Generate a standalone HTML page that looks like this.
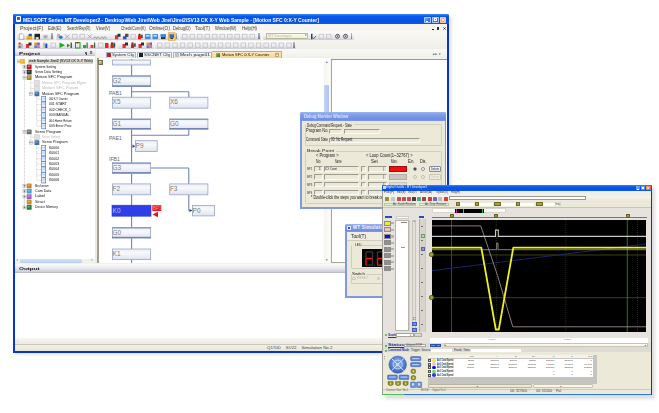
<!DOCTYPE html>
<html><head><meta charset="utf-8">
<style>
*{margin:0;padding:0;box-sizing:border-box}
html,body{width:659px;height:413px;overflow:hidden;background:#fff;font-family:"Liberation Sans",sans-serif}
#root{position:absolute;left:0;top:0;width:659px;height:413px;overflow:hidden;filter:blur(0.3px)}
.a{position:absolute}
.t{position:absolute;white-space:nowrap;line-height:1;font-size:5px;color:#222}
svg text{font-family:"Liberation Sans",sans-serif}
</style></head><body>
<div id="root">
<!-- main -->
<div class="a" style="left:15px;top:17px;width:436.5px;height:338px;background:rgba(0,0,0,0.09);filter:blur(1.2px)"></div>
<div class="a" style="left:13px;top:14px;width:436px;height:338.8px;background:#0a34c8;border-radius:2px 2px 0 0"></div>
<div class="a" style="left:13px;top:14px;width:436px;height:10px;background:linear-gradient(#3d86f8,#0a58ea 25%,#0552e4 70%,#0d58e8);border-radius:2px 2px 0 0"></div>
<div class="a" style="left:15.5px;top:16px;width:5px;height:6px;background:#fff;border-radius:1px"></div>
<div class="a" style="left:16.5px;top:17px;width:3px;height:2.5px;background:#3060e0"></div>
<div class="t" style="left:22.5px;top:19.0px;font-size:4.9px;color:#fff;font-weight:bold;transform-origin:0 0;transform:scaleX(1.022);">MELSOFT Series MT Developer2 - Desktop\Web Jirei\Web Jirei\Jirei2\SV13 CK X-Y Web Sample - [Motion SFC 0:X-Y Counter]</div>
<div class="a" style="left:424px;top:16.6px;width:6.6px;height:6.2px;background:linear-gradient(135deg,#7fb0fa,#3a78ee 60%,#2a64e0);border:0.4px solid #a8c8ff;border-radius:0.8px"></div>
<div class="a" style="left:432px;top:16.6px;width:6.6px;height:6.2px;background:linear-gradient(135deg,#7fb0fa,#3a78ee 60%,#2a64e0);border:0.4px solid #a8c8ff;border-radius:0.8px"></div>
<div class="a" style="left:440px;top:16.6px;width:6.4px;height:6.2px;background:linear-gradient(135deg,#f8a070,#e85a28 60%,#d84818);border:0.4px solid #ffc8a8;border-radius:0.8px"></div>
<div class="a" style="left:425.5px;top:20.6px;width:2.6px;height:0.9px;background:#fff"></div>
<div class="a" style="left:434px;top:18.3px;width:2.6px;height:2.4px;border:0.6px solid #fff;border-top-width:0.9px"></div>
<svg class="a" style="left:440px;top:16.6px" width="6.4" height="6.2" viewBox="0 0 6.4 6.2"><path d="M1.6,1.5 L4.8,4.7 M4.8,1.5 L1.6,4.7" stroke="#fff" stroke-width="1.1"/></svg>
<div class="a" style="left:15px;top:24px;width:432px;height:327px;background:#f3f2ec"></div>
<div class="a" style="left:15px;top:24px;width:432px;height:7px;background:#f6f5f0"></div>
<div class="t" style="left:20px;top:26.8px;font-size:4.5px;color:#3a3a3a;transform-origin:0 0;transform:scaleX(1.180);">Project(F)</div>
<div class="t" style="left:48.3px;top:26.8px;font-size:4.5px;color:#3a3a3a;transform-origin:0 0;transform:scaleX(0.974);">Edit(E)</div>
<div class="t" style="left:66.7px;top:26.8px;font-size:4.5px;color:#3a3a3a;transform-origin:0 0;transform:scaleX(0.776);">Search/Rep(R)</div>
<div class="t" style="left:95.8px;top:26.8px;font-size:4.5px;color:#3a3a3a;transform-origin:0 0;transform:scaleX(0.906);">View(V)</div>
<div class="t" style="left:121px;top:26.8px;font-size:4.5px;color:#3a3a3a;transform-origin:0 0;transform:scaleX(0.806);">Check/Conv(K)</div>
<div class="t" style="left:149px;top:26.8px;font-size:4.5px;color:#3a3a3a;transform-origin:0 0;transform:scaleX(1.077);">Online(O)</div>
<div class="t" style="left:172.5px;top:26.8px;font-size:4.5px;color:#3a3a3a;transform-origin:0 0;transform:scaleX(0.897);">Debug(D)</div>
<div class="t" style="left:195px;top:26.8px;font-size:4.5px;color:#3a3a3a;transform-origin:0 0;transform:scaleX(1.071);">Tool(T)</div>
<div class="t" style="left:215px;top:26.8px;font-size:4.5px;color:#3a3a3a;transform-origin:0 0;transform:scaleX(0.920);">Window(W)</div>
<div class="t" style="left:241.5px;top:26.8px;font-size:4.5px;color:#3a3a3a;transform-origin:0 0;transform:scaleX(0.968);">Help(H)</div>
<div class="a" style="left:431.5px;top:29.4px;width:2.2px;height:0.9px;background:#222"></div>
<div class="a" style="left:436.6px;top:27.3px;width:2.6px;height:2.6px;background:#333"></div>
<svg class="a" style="left:442.5px;top:27px" width="3" height="3" viewBox="0 0 3 3"><path d="M0.4,0.4 L2.6,2.6 M2.6,0.4 L0.4,2.6" stroke="#222" stroke-width="0.8"/></svg>
<div class="a" style="left:15px;top:31px;width:432px;height:18px;background:linear-gradient(#f8f8f5,#efeee8)"></div>
<div class="a" style="left:16.5px;top:31.8px;width:37.5px;height:8.4px;background:linear-gradient(#fefefe,#f0f0f2 45%,#dcdce6 85%,#c8c8d4);border-radius:1.5px"></div>
<div class="a" style="left:51.4px;top:33px;width:1.6px;height:6.2px;background:linear-gradient(#b8b8c4,#7c7c8c)"></div>
<div class="a" style="left:55.5px;top:31.8px;width:123.0px;height:8.4px;background:linear-gradient(#fefefe,#f0f0f2 45%,#dcdce6 85%,#c8c8d4);border-radius:1.5px"></div>
<div class="a" style="left:175.9px;top:33px;width:1.6px;height:6.2px;background:linear-gradient(#b8b8c4,#7c7c8c)"></div>
<div class="a" style="left:180px;top:31.8px;width:81px;height:8.4px;background:linear-gradient(#fefefe,#f0f0f2 45%,#dcdce6 85%,#c8c8d4);border-radius:1.5px"></div>
<div class="a" style="left:258.4px;top:33px;width:1.6px;height:6.2px;background:linear-gradient(#b8b8c4,#7c7c8c)"></div>
<div class="a" style="left:263px;top:31.8px;width:90.5px;height:8.4px;background:linear-gradient(#fefefe,#f0f0f2 45%,#dcdce6 85%,#c8c8d4);border-radius:1.5px"></div>
<div class="a" style="left:350.9px;top:33px;width:1.6px;height:6.2px;background:linear-gradient(#b8b8c4,#7c7c8c)"></div>
<div class="a" style="left:16.5px;top:40.6px;width:99.5px;height:8.4px;background:linear-gradient(#fefefe,#f0f0f2 45%,#dcdce6 85%,#c8c8d4);border-radius:1.5px"></div>
<div class="a" style="left:113.4px;top:41.8px;width:1.6px;height:6.2px;background:linear-gradient(#b8b8c4,#7c7c8c)"></div>
<div class="a" style="left:117.5px;top:40.6px;width:36.0px;height:8.4px;background:linear-gradient(#fefefe,#f0f0f2 45%,#dcdce6 85%,#c8c8d4);border-radius:1.5px"></div>
<div class="a" style="left:150.9px;top:41.8px;width:1.6px;height:6.2px;background:linear-gradient(#b8b8c4,#7c7c8c)"></div>
<div class="a" style="left:155px;top:40.6px;width:141px;height:8.4px;background:linear-gradient(#fefefe,#f0f0f2 45%,#dcdce6 85%,#c8c8d4);border-radius:1.5px"></div>
<div class="a" style="left:293.4px;top:41.8px;width:1.6px;height:6.2px;background:linear-gradient(#b8b8c4,#7c7c8c)"></div>
<svg class="a" style="left:0;top:0" width="460" height="50" viewBox="0 0 460 50"><path d="M19.3,33.8 h3 l1.5,1.5 v4 h-4.5 z" fill="#fff" stroke="#8a8a8a" stroke-width="0.6"/><rect x="26.6" y="35.8" width="5.5" height="3.5" fill="#f0b818"/><rect x="28.6" y="33.8" width="3.2" height="2.4" fill="#2448c8"/><rect x="26.6" y="37.8" width="5.5" height="1.5" fill="#e8a010"/><rect x="34.5" y="33.8" width="5.5" height="5.5" fill="#222"/><rect x="35.7" y="37.099999999999994" width="3" height="2.2" fill="#e8e8d0"/><rect x="43.3" y="34.8" width="4.5" height="4" fill="#c8c8b8"/><rect x="44.3" y="35.8" width="2" height="2" fill="#a0a080"/><rect x="57" y="33.8" width="3" height="4" fill="#b8b8c0"/><circle cx="60.8" cy="37.3" r="1.8" fill="#2878d8"/><path d="M65.0,34.3 L69.5,38.8 M69.5,34.3 L65.0,38.8" stroke="#a0a0a0" stroke-width="0.8"/><rect x="72.5" y="34.3" width="4.5" height="4.5" fill="none" stroke="#c4c4c4" stroke-width="0.8"/><rect x="80.0" y="34.3" width="4.5" height="4.5" fill="none" stroke="#c4c4c4" stroke-width="0.8"/><path d="M87.5,34.3 L92,38.8 M92,34.3 L87.5,38.8" stroke="#a0a0a0" stroke-width="0.8"/><path d="M93.5,38.8 q1.5,-4 3,0 M96.5,38.8 q1.5,-4 3,0" stroke="#909090" stroke-width="0.9" fill="none"/><path d="M100.5,38.8 q1.5,-4 3,0 M103.5,38.8 q1.5,-4 3,0" stroke="#909090" stroke-width="0.9" fill="none"/><rect x="115" y="35.3" width="3.2" height="4" fill="#e03030"/><rect x="117.5" y="33.8" width="3" height="3" fill="#203828"/><rect x="123" y="36.3" width="3.5" height="3" fill="#2850e0"/><rect x="125.2" y="33.8" width="3.2" height="3" fill="#303018"/><rect x="126.4" y="34.4" width="1.6" height="1.6" fill="#e04020"/><rect x="131.0" y="34.3" width="4.5" height="4.5" fill="none" stroke="#c4c4c4" stroke-width="0.8"/><rect x="138.0" y="35.599999999999994" width="3" height="3.7" fill="#e81818"/><rect x="138.5" y="33.8" width="2" height="2" fill="#602020"/><rect x="141.1" y="34.599999999999994" width="1.6" height="3.5" fill="#305040"/><rect x="145" y="34.099999999999994" width="5.5" height="5" fill="#4088e0"/><rect x="146" y="35.0" width="3.5" height="1.6" fill="#c8e0ff"/><rect x="152.5" y="34.099999999999994" width="5.5" height="5" fill="#4088e0"/><rect x="153.5" y="35.0" width="3.5" height="1.6" fill="#c8e0ff"/><rect x="160.5" y="34.099999999999994" width="5.5" height="3" fill="#4088e0"/><rect x="161.0" y="37.099999999999994" width="4.5" height="2" fill="#303030"/><rect x="168.2" y="32.8" width="7" height="7.5" fill="#f8c860" stroke="#d09030" stroke-width="0.5"/><rect x="169.5" y="34.3" width="4.5" height="3.5" fill="#3068c8"/><rect x="170.5" y="37.8" width="2.5" height="1.2" fill="#303030"/><rect x="182.5" y="34.3" width="4.5" height="4.5" fill="none" stroke="#c4c4c4" stroke-width="0.8"/><rect x="190.0" y="34.3" width="4.5" height="4.5" fill="none" stroke="#c4c4c4" stroke-width="0.8"/><rect x="197.5" y="34.3" width="4.5" height="4.5" fill="none" stroke="#c4c4c4" stroke-width="0.8"/><rect x="205.0" y="34.3" width="4.5" height="4.5" fill="none" stroke="#c4c4c4" stroke-width="0.8"/><rect x="212.5" y="34.3" width="4.5" height="4.5" fill="none" stroke="#c4c4c4" stroke-width="0.8"/><rect x="220.0" y="34.3" width="4.5" height="4.5" fill="none" stroke="#c4c4c4" stroke-width="0.8"/><rect x="227.5" y="34.3" width="4.5" height="4.5" fill="none" stroke="#c4c4c4" stroke-width="0.8"/><rect x="235.0" y="34.3" width="4.5" height="4.5" fill="none" stroke="#c4c4c4" stroke-width="0.8"/><rect x="242.5" y="34.3" width="4.5" height="4.5" fill="none" stroke="#c4c4c4" stroke-width="0.8"/><rect x="250.0" y="34.3" width="4.5" height="4.5" fill="none" stroke="#c4c4c4" stroke-width="0.8"/><rect x="311" y="33.8" width="1.5" height="5.5" fill="#404040"/><path d="M312.5,37.3 L313.8,38.8 L316,35.8" stroke="#20a020" stroke-width="1" fill="none"/><rect x="319.0" y="34.3" width="4.5" height="4.5" fill="none" stroke="#c4c4c4" stroke-width="0.8"/><rect x="326.5" y="34.3" width="4.5" height="4.5" fill="none" stroke="#c4c4c4" stroke-width="0.8"/><circle cx="337.5" cy="36.3" r="2" fill="#d8d8d8" stroke="#505050" stroke-width="0.9"/><line x1="337.5" y1="35.4" x2="337.5" y2="37.199999999999996" stroke="#303030" stroke-width="0.6"/><circle cx="345.5" cy="36.3" r="2" fill="#d8d8d8" stroke="#505050" stroke-width="0.9"/><line x1="345.5" y1="35.4" x2="345.5" y2="37.199999999999996" stroke="#303030" stroke-width="0.6"/><rect x="18.5" y="42.5" width="2.2" height="2.2" fill="#e03838"/><rect x="18.5" y="45.5" width="2.2" height="2.4" fill="#607060"/><rect x="21.2" y="43.5" width="1.6" height="4.4" fill="#b0b0b8"/><rect x="26" y="44.0" width="3.2" height="4" fill="#e03030"/><rect x="28.5" y="42.5" width="3" height="3" fill="#203828"/><rect x="34.3" y="42.5" width="2.7" height="2.7" fill="#f09030"/><rect x="37.099999999999994" y="42.5" width="2.7" height="2.7" fill="#8060d0"/><rect x="34.3" y="45.3" width="2.7" height="2.7" fill="#5080e0"/><rect x="37.099999999999994" y="45.3" width="2.7" height="2.7" fill="#e07070"/><rect x="43.0" y="42.5" width="2" height="5.5" fill="#b8c0d8"/><rect x="45.3" y="43.5" width="2" height="4.5" fill="#2840b8"/><rect x="51.0" y="43.0" width="4.5" height="4.5" fill="none" stroke="#c4c4c4" stroke-width="0.8"/><path d="M59.5,42.5 L65.0,45.3 L59.5,48.1 z" fill="#18b018"/><path d="M67,43.5 L70,45.5 L67,47.5 z" fill="#18a018"/><rect x="70.5" y="42.5" width="1.5" height="5.5" fill="#506050"/><rect x="75.5" y="42.5" width="4.5" height="5.5" fill="none" stroke="#18a018" stroke-width="1"/><rect x="76.5" y="42.2" width="2" height="1.5" fill="#e03030"/><rect x="83.0" y="45.0" width="3" height="3" fill="#20b020"/><rect x="86.5" y="42.5" width="1.2" height="5.5" fill="#506050"/><rect x="90.5" y="45.0" width="3" height="3" fill="#f04010"/><rect x="94" y="42.5" width="1.2" height="5.5" fill="#506050"/><rect x="98.5" y="43.0" width="4.5" height="4.5" fill="none" stroke="#c4c4c4" stroke-width="0.8"/><rect x="105" y="43.0" width="3.5" height="5" fill="#f02020"/><rect x="110.5" y="44.3" width="3" height="3.7" fill="#e81818"/><rect x="111" y="42.5" width="2" height="2" fill="#602020"/><rect x="113.6" y="43.3" width="1.6" height="3.5" fill="#305040"/><rect x="122.5" y="44.0" width="3.2" height="4" fill="#e03030"/><rect x="125.0" y="42.5" width="3" height="3" fill="#203828"/><rect x="131.0" y="44.3" width="3" height="3.7" fill="#e81818"/><rect x="131.5" y="42.5" width="2" height="2" fill="#602020"/><rect x="134.1" y="43.3" width="1.6" height="3.5" fill="#305040"/><rect x="138.5" y="44.0" width="3.2" height="4" fill="#e03030"/><rect x="141.0" y="42.5" width="3" height="3" fill="#203828"/><rect x="146.5" y="42.5" width="2.7" height="2.7" fill="#f09030"/><rect x="149.3" y="42.5" width="2.7" height="2.7" fill="#8060d0"/><rect x="146.5" y="45.3" width="2.7" height="2.7" fill="#5080e0"/><rect x="149.3" y="45.3" width="2.7" height="2.7" fill="#e07070"/><rect x="157.5" y="43.0" width="4.5" height="4.5" fill="none" stroke="#c4c4c4" stroke-width="0.8"/><rect x="165.1" y="43.0" width="4.5" height="4.5" fill="none" stroke="#c4c4c4" stroke-width="0.8"/><rect x="172.7" y="43.0" width="4.5" height="4.5" fill="none" stroke="#c4c4c4" stroke-width="0.8"/><rect x="180.3" y="43.0" width="4.5" height="4.5" fill="none" stroke="#c4c4c4" stroke-width="0.8"/><rect x="187.9" y="43.0" width="4.5" height="4.5" fill="none" stroke="#c4c4c4" stroke-width="0.8"/><rect x="195.5" y="43.0" width="4.5" height="4.5" fill="none" stroke="#c4c4c4" stroke-width="0.8"/><rect x="203.1" y="43.0" width="4.5" height="4.5" fill="none" stroke="#c4c4c4" stroke-width="0.8"/><rect x="210.7" y="43.0" width="4.5" height="4.5" fill="none" stroke="#c4c4c4" stroke-width="0.8"/><rect x="218.3" y="43.0" width="4.5" height="4.5" fill="none" stroke="#c4c4c4" stroke-width="0.8"/><rect x="225.89999999999998" y="43.0" width="4.5" height="4.5" fill="none" stroke="#c4c4c4" stroke-width="0.8"/><rect x="233.5" y="43.0" width="4.5" height="4.5" fill="none" stroke="#c4c4c4" stroke-width="0.8"/><rect x="241.1" y="43.0" width="4.5" height="4.5" fill="none" stroke="#c4c4c4" stroke-width="0.8"/><rect x="248.7" y="43.0" width="4.5" height="4.5" fill="none" stroke="#c4c4c4" stroke-width="0.8"/><rect x="256.3" y="43.0" width="4.5" height="4.5" fill="none" stroke="#c4c4c4" stroke-width="0.8"/><rect x="263.9" y="43.0" width="4.5" height="4.5" fill="none" stroke="#c4c4c4" stroke-width="0.8"/><rect x="271.5" y="43.0" width="4.5" height="4.5" fill="none" stroke="#c4c4c4" stroke-width="0.8"/><rect x="279.1" y="43.0" width="4.5" height="4.5" fill="none" stroke="#c4c4c4" stroke-width="0.8"/><rect x="286.7" y="43.0" width="4.5" height="4.5" fill="none" stroke="#c4c4c4" stroke-width="0.8"/></svg>
<div class="a" style="left:266.4px;top:33.3px;width:42px;height:6px;background:linear-gradient(#fdfde8,#f2f0d0);border:0.6px solid #b8b8a0"></div>
<div class="t" style="left:268px;top:34.6px;font-size:3.8px;color:#b8b8a0;">MT Developer</div>
<div class="t" style="left:304.6px;top:35.2px;font-size:2.6px;color:#444;">&#x25BC;</div>
<div class="a" style="left:15px;top:49px;width:81px;height:216px;background:#fff"></div>
<div class="a" style="left:95px;top:49px;width:2px;height:216px;background:#eceae3"></div>
<div class="a" style="left:15px;top:49px;width:80px;height:7px;background:linear-gradient(#fbfbfc,#ececf0 40%,#d6d6e0 80%,#bcbcc8)"></div>
<div class="t" style="left:18.7px;top:52px;font-size:4.1px;color:#111;transform-origin:0 0;transform:scaleX(1.512);font-weight:bold">Project</div>
<div class="a" style="left:84.6px;top:51.5px;width:2.2px;height:2.2px;background:#333;border-radius:50%"></div>
<div class="a" style="left:85.5px;top:53.5px;width:0.5px;height:1.5px;background:#333"></div>
<div class="t" style="left:89.8px;top:50.6px;font-size:4.6px;color:#333;font-weight:bold">x</div>
<div class="a" style="left:28.1px;top:58.8px;width:64.5px;height:5.2px;background:#d6d5ce"></div>
<svg class="a" style="left:15px;top:56px" width="80" height="160" viewBox="15 56 80 160"><line x1="24.5" y1="63" x2="24.5" y2="207.4" stroke="#a8a8a8" stroke-width="0.6" stroke-dasharray="0.7,0.7"/><line x1="30.8" y1="79" x2="30.8" y2="93.8" stroke="#a8a8a8" stroke-width="0.6" stroke-dasharray="0.7,0.7"/><line x1="36.7" y1="95.5" x2="36.7" y2="126.2" stroke="#a8a8a8" stroke-width="0.6" stroke-dasharray="0.7,0.7"/><line x1="30.8" y1="133.5" x2="30.8" y2="142.6" stroke="#a8a8a8" stroke-width="0.6" stroke-dasharray="0.7,0.7"/><line x1="36.7" y1="144" x2="36.7" y2="180.4" stroke="#a8a8a8" stroke-width="0.6" stroke-dasharray="0.7,0.7"/><line x1="22.8" y1="66.8" x2="27" y2="66.8" stroke="#a8a8a8" stroke-width="0.6" stroke-dasharray="0.7,0.7"/><line x1="22.8" y1="72.2" x2="27" y2="72.2" stroke="#a8a8a8" stroke-width="0.6" stroke-dasharray="0.7,0.7"/><line x1="22.8" y1="77.6" x2="27" y2="77.6" stroke="#a8a8a8" stroke-width="0.6" stroke-dasharray="0.7,0.7"/><line x1="30.500000000000004" y1="83.0" x2="34.7" y2="83.0" stroke="#a8a8a8" stroke-width="0.6" stroke-dasharray="0.7,0.7"/><line x1="30.500000000000004" y1="88.4" x2="34.7" y2="88.4" stroke="#a8a8a8" stroke-width="0.6" stroke-dasharray="0.7,0.7"/><line x1="30.500000000000004" y1="93.8" x2="34.7" y2="93.8" stroke="#a8a8a8" stroke-width="0.6" stroke-dasharray="0.7,0.7"/><line x1="37.3" y1="99.2" x2="41.5" y2="99.2" stroke="#a8a8a8" stroke-width="0.6" stroke-dasharray="0.7,0.7"/><line x1="37.3" y1="104.6" x2="41.5" y2="104.6" stroke="#a8a8a8" stroke-width="0.6" stroke-dasharray="0.7,0.7"/><line x1="37.3" y1="110.0" x2="41.5" y2="110.0" stroke="#a8a8a8" stroke-width="0.6" stroke-dasharray="0.7,0.7"/><line x1="37.3" y1="115.4" x2="41.5" y2="115.4" stroke="#a8a8a8" stroke-width="0.6" stroke-dasharray="0.7,0.7"/><line x1="37.3" y1="120.8" x2="41.5" y2="120.8" stroke="#a8a8a8" stroke-width="0.6" stroke-dasharray="0.7,0.7"/><line x1="37.3" y1="126.2" x2="41.5" y2="126.2" stroke="#a8a8a8" stroke-width="0.6" stroke-dasharray="0.7,0.7"/><line x1="22.8" y1="131.8" x2="27" y2="131.8" stroke="#a8a8a8" stroke-width="0.6" stroke-dasharray="0.7,0.7"/><line x1="30.500000000000004" y1="137.2" x2="34.7" y2="137.2" stroke="#a8a8a8" stroke-width="0.6" stroke-dasharray="0.7,0.7"/><line x1="30.500000000000004" y1="142.6" x2="34.7" y2="142.6" stroke="#a8a8a8" stroke-width="0.6" stroke-dasharray="0.7,0.7"/><line x1="37.3" y1="148.0" x2="41.5" y2="148.0" stroke="#a8a8a8" stroke-width="0.6" stroke-dasharray="0.7,0.7"/><line x1="37.3" y1="153.4" x2="41.5" y2="153.4" stroke="#a8a8a8" stroke-width="0.6" stroke-dasharray="0.7,0.7"/><line x1="37.3" y1="158.8" x2="41.5" y2="158.8" stroke="#a8a8a8" stroke-width="0.6" stroke-dasharray="0.7,0.7"/><line x1="37.3" y1="164.2" x2="41.5" y2="164.2" stroke="#a8a8a8" stroke-width="0.6" stroke-dasharray="0.7,0.7"/><line x1="37.3" y1="169.6" x2="41.5" y2="169.6" stroke="#a8a8a8" stroke-width="0.6" stroke-dasharray="0.7,0.7"/><line x1="37.3" y1="175.0" x2="41.5" y2="175.0" stroke="#a8a8a8" stroke-width="0.6" stroke-dasharray="0.7,0.7"/><line x1="37.3" y1="180.4" x2="41.5" y2="180.4" stroke="#a8a8a8" stroke-width="0.6" stroke-dasharray="0.7,0.7"/><line x1="22.8" y1="185.8" x2="27" y2="185.8" stroke="#a8a8a8" stroke-width="0.6" stroke-dasharray="0.7,0.7"/><line x1="22.8" y1="191.2" x2="27" y2="191.2" stroke="#a8a8a8" stroke-width="0.6" stroke-dasharray="0.7,0.7"/><line x1="22.8" y1="196.6" x2="27" y2="196.6" stroke="#a8a8a8" stroke-width="0.6" stroke-dasharray="0.7,0.7"/><line x1="22.8" y1="202.0" x2="27" y2="202.0" stroke="#a8a8a8" stroke-width="0.6" stroke-dasharray="0.7,0.7"/><line x1="22.8" y1="207.4" x2="27" y2="207.4" stroke="#a8a8a8" stroke-width="0.6" stroke-dasharray="0.7,0.7"/><rect x="17.5" y="59.9" width="3" height="3" fill="#fff" stroke="#9ca0b0" stroke-width="0.5"/><line x1="18.1" y1="61.4" x2="19.9" y2="61.4" stroke="#333" stroke-width="0.5"/><rect x="20.1" y="59.0" width="4.8" height="4.8" fill="#f0b020" rx="0.5"/><rect x="21.1" y="60.0" width="2" height="1.6" fill="#fff" opacity="0.35"/><rect x="23.0" y="65.3" width="3" height="3" fill="#fff" stroke="#9ca0b0" stroke-width="0.5"/><line x1="23.6" y1="66.8" x2="25.4" y2="66.8" stroke="#333" stroke-width="0.5"/><line x1="24.5" y1="65.89999999999999" x2="24.5" y2="67.7" stroke="#333" stroke-width="0.5"/><rect x="26.8" y="64.39999999999999" width="4.8" height="4.8" fill="#c02020" rx="0.5"/><rect x="27.8" y="65.39999999999999" width="2" height="1.6" fill="#fff" opacity="0.35"/><rect x="23.0" y="70.7" width="3" height="3" fill="#fff" stroke="#9ca0b0" stroke-width="0.5"/><line x1="23.6" y1="72.2" x2="25.4" y2="72.2" stroke="#333" stroke-width="0.5"/><line x1="24.5" y1="71.3" x2="24.5" y2="73.10000000000001" stroke="#333" stroke-width="0.5"/><rect x="26.8" y="69.8" width="4.8" height="4.8" fill="#303030" rx="0.5"/><rect x="27.8" y="70.8" width="2" height="1.6" fill="#fff" opacity="0.35"/><rect x="23.0" y="76.1" width="3" height="3" fill="#fff" stroke="#9ca0b0" stroke-width="0.5"/><line x1="23.6" y1="77.6" x2="25.4" y2="77.6" stroke="#333" stroke-width="0.5"/><rect x="26.8" y="75.19999999999999" width="4.8" height="4.8" fill="#a09020" rx="0.5"/><rect x="27.8" y="76.19999999999999" width="2" height="1.6" fill="#fff" opacity="0.35"/><rect x="34.7" y="80.6" width="4.6" height="4.8" fill="#e0e0e0" stroke="#c0c0c0" stroke-width="0.5"/><rect x="34.7" y="86.0" width="4.6" height="4.8" fill="#e0e0e0" stroke="#c0c0c0" stroke-width="0.5"/><rect x="29.3" y="92.3" width="3" height="3" fill="#fff" stroke="#9ca0b0" stroke-width="0.5"/><line x1="29.900000000000002" y1="93.8" x2="31.7" y2="93.8" stroke="#333" stroke-width="0.5"/><rect x="34.5" y="91.39999999999999" width="4.8" height="4.8" fill="#4070a0" rx="0.5"/><rect x="35.5" y="92.39999999999999" width="2" height="1.6" fill="#fff" opacity="0.35"/><rect x="41.7" y="96.60000000000001" width="4" height="5.2" fill="#e4eefc" stroke="#3c70c8" stroke-width="0.6"/><line x1="42.5" y1="98.7" x2="44.9" y2="98.7" stroke="#7aa0e0" stroke-width="0.5"/><rect x="41.7" y="102.0" width="4" height="5.2" fill="#e4eefc" stroke="#3c70c8" stroke-width="0.6"/><line x1="42.5" y1="104.1" x2="44.9" y2="104.1" stroke="#7aa0e0" stroke-width="0.5"/><rect x="41.7" y="107.4" width="4" height="5.2" fill="#e4eefc" stroke="#3c70c8" stroke-width="0.6"/><line x1="42.5" y1="109.5" x2="44.9" y2="109.5" stroke="#7aa0e0" stroke-width="0.5"/><rect x="41.7" y="112.80000000000001" width="4" height="5.2" fill="#e4eefc" stroke="#3c70c8" stroke-width="0.6"/><line x1="42.5" y1="114.9" x2="44.9" y2="114.9" stroke="#7aa0e0" stroke-width="0.5"/><rect x="41.7" y="118.2" width="4" height="5.2" fill="#e4eefc" stroke="#3c70c8" stroke-width="0.6"/><line x1="42.5" y1="120.3" x2="44.9" y2="120.3" stroke="#7aa0e0" stroke-width="0.5"/><rect x="41.7" y="123.60000000000001" width="4" height="5.2" fill="#e4eefc" stroke="#3c70c8" stroke-width="0.6"/><line x1="42.5" y1="125.7" x2="44.9" y2="125.7" stroke="#7aa0e0" stroke-width="0.5"/><rect x="23.0" y="130.3" width="3" height="3" fill="#fff" stroke="#9ca0b0" stroke-width="0.5"/><line x1="23.6" y1="131.8" x2="25.4" y2="131.8" stroke="#333" stroke-width="0.5"/><rect x="26.8" y="129.4" width="4.8" height="4.8" fill="#707070" rx="0.5"/><rect x="27.8" y="130.4" width="2" height="1.6" fill="#fff" opacity="0.35"/><rect x="34.7" y="134.79999999999998" width="4.6" height="4.8" fill="#e0e0e0" stroke="#c0c0c0" stroke-width="0.5"/><rect x="29.3" y="141.1" width="3" height="3" fill="#fff" stroke="#9ca0b0" stroke-width="0.5"/><line x1="29.900000000000002" y1="142.6" x2="31.7" y2="142.6" stroke="#333" stroke-width="0.5"/><rect x="34.5" y="140.2" width="4.8" height="4.8" fill="#4070a0" rx="0.5"/><rect x="35.5" y="141.2" width="2" height="1.6" fill="#fff" opacity="0.35"/><rect x="41.7" y="145.4" width="4" height="5.2" fill="#e4eefc" stroke="#3c70c8" stroke-width="0.6"/><line x1="42.5" y1="147.5" x2="44.9" y2="147.5" stroke="#7aa0e0" stroke-width="0.5"/><rect x="41.7" y="150.8" width="4" height="5.2" fill="#e4eefc" stroke="#3c70c8" stroke-width="0.6"/><line x1="42.5" y1="152.9" x2="44.9" y2="152.9" stroke="#7aa0e0" stroke-width="0.5"/><rect x="41.7" y="156.20000000000002" width="4" height="5.2" fill="#e4eefc" stroke="#3c70c8" stroke-width="0.6"/><line x1="42.5" y1="158.3" x2="44.9" y2="158.3" stroke="#7aa0e0" stroke-width="0.5"/><rect x="41.7" y="161.6" width="4" height="5.2" fill="#e4eefc" stroke="#3c70c8" stroke-width="0.6"/><line x1="42.5" y1="163.7" x2="44.9" y2="163.7" stroke="#7aa0e0" stroke-width="0.5"/><rect x="41.7" y="167.0" width="4" height="5.2" fill="#e4eefc" stroke="#3c70c8" stroke-width="0.6"/><line x1="42.5" y1="169.1" x2="44.9" y2="169.1" stroke="#7aa0e0" stroke-width="0.5"/><rect x="41.7" y="172.4" width="4" height="5.2" fill="#e4eefc" stroke="#3c70c8" stroke-width="0.6"/><line x1="42.5" y1="174.5" x2="44.9" y2="174.5" stroke="#7aa0e0" stroke-width="0.5"/><rect x="41.7" y="177.8" width="4" height="5.2" fill="#e4eefc" stroke="#3c70c8" stroke-width="0.6"/><line x1="42.5" y1="179.9" x2="44.9" y2="179.9" stroke="#7aa0e0" stroke-width="0.5"/><rect x="23.0" y="184.3" width="3" height="3" fill="#fff" stroke="#9ca0b0" stroke-width="0.5"/><line x1="23.6" y1="185.8" x2="25.4" y2="185.8" stroke="#333" stroke-width="0.5"/><line x1="24.5" y1="184.9" x2="24.5" y2="186.70000000000002" stroke="#333" stroke-width="0.5"/><rect x="26.8" y="183.4" width="4.8" height="4.8" fill="#d08020" rx="0.5"/><rect x="27.8" y="184.4" width="2" height="1.6" fill="#fff" opacity="0.35"/><rect x="23.0" y="189.7" width="3" height="3" fill="#fff" stroke="#9ca0b0" stroke-width="0.5"/><line x1="23.6" y1="191.2" x2="25.4" y2="191.2" stroke="#333" stroke-width="0.5"/><line x1="24.5" y1="190.29999999999998" x2="24.5" y2="192.1" stroke="#333" stroke-width="0.5"/><rect x="26.8" y="188.79999999999998" width="4.8" height="4.8" fill="#40a0d0" rx="0.5"/><rect x="27.8" y="189.79999999999998" width="2" height="1.6" fill="#fff" opacity="0.35"/><rect x="23.0" y="195.1" width="3" height="3" fill="#fff" stroke="#9ca0b0" stroke-width="0.5"/><line x1="23.6" y1="196.6" x2="25.4" y2="196.6" stroke="#333" stroke-width="0.5"/><line x1="24.5" y1="195.7" x2="24.5" y2="197.5" stroke="#333" stroke-width="0.5"/><rect x="26.8" y="194.2" width="4.8" height="4.8" fill="#a060c0" rx="0.5"/><rect x="27.8" y="195.2" width="2" height="1.6" fill="#fff" opacity="0.35"/><rect x="26.8" y="199.6" width="4.8" height="4.8" fill="#c09020" rx="0.5"/><rect x="27.8" y="200.6" width="2" height="1.6" fill="#fff" opacity="0.35"/><rect x="23.0" y="205.9" width="3" height="3" fill="#fff" stroke="#9ca0b0" stroke-width="0.5"/><line x1="23.6" y1="207.4" x2="25.4" y2="207.4" stroke="#333" stroke-width="0.5"/><line x1="24.5" y1="206.5" x2="24.5" y2="208.3" stroke="#333" stroke-width="0.5"/><rect x="26.8" y="205.0" width="4.8" height="4.8" fill="#208040" rx="0.5"/><rect x="27.8" y="206.0" width="2" height="1.6" fill="#fff" opacity="0.35"/></svg>
<div class="t" style="left:28.6px;top:59.1px;font-size:4.4px;color:#000;transform-origin:0 0;transform:scaleX(0.831);">web Sample Jirei2 (SV13 CK X-Y Web)</div>
<div class="t" style="left:35px;top:64.5px;font-size:4.4px;color:#111;transform-origin:0 0;transform:scaleX(0.716);">System Setting</div>
<div class="t" style="left:35px;top:69.9px;font-size:4.4px;color:#111;transform-origin:0 0;transform:scaleX(0.731);">Servo Data Setting</div>
<div class="t" style="left:35px;top:75.3px;font-size:4.4px;color:#111;transform-origin:0 0;transform:scaleX(0.903);">Motion SFC Program</div>
<div class="t" style="left:42px;top:80.7px;font-size:4.4px;color:#b8b8b8;transform-origin:0 0;transform:scaleX(0.820);">Motion SFC Program Mgmt</div>
<div class="t" style="left:42px;top:86.10000000000001px;font-size:4.4px;color:#b8b8b8;transform-origin:0 0;transform:scaleX(0.970);">Motion SFC Param</div>
<div class="t" style="left:42px;top:91.5px;font-size:4.4px;color:#111;transform-origin:0 0;transform:scaleX(0.895);">Motion SFC Program</div>
<div class="t" style="left:48.6px;top:96.9px;font-size:4.4px;color:#111;transform-origin:0 0;transform:scaleX(0.569);">000:X-Y Counter</div>
<div class="t" style="left:48.6px;top:102.3px;font-size:4.4px;color:#111;transform-origin:0 0;transform:scaleX(0.788);">001:START</div>
<div class="t" style="left:48.6px;top:107.7px;font-size:4.4px;color:#111;transform-origin:0 0;transform:scaleX(0.762);">002:CHECK_1</div>
<div class="t" style="left:48.6px;top:113.10000000000001px;font-size:4.4px;color:#111;transform-origin:0 0;transform:scaleX(0.758);">003:MANUAL</div>
<div class="t" style="left:48.6px;top:118.5px;font-size:4.4px;color:#111;transform-origin:0 0;transform:scaleX(0.659);">004:Home Return</div>
<div class="t" style="left:48.6px;top:123.9px;font-size:4.4px;color:#111;transform-origin:0 0;transform:scaleX(0.797);">005:Error Proc</div>
<div class="t" style="left:35px;top:129.5px;font-size:4.4px;color:#111;transform-origin:0 0;transform:scaleX(0.892);">Servo Program</div>
<div class="t" style="left:42px;top:134.89999999999998px;font-size:4.4px;color:#b8b8b8;transform-origin:0 0;transform:scaleX(0.681);">Servo Setting</div>
<div class="t" style="left:42px;top:140.29999999999998px;font-size:4.4px;color:#111;transform-origin:0 0;transform:scaleX(0.869);">Servo Program</div>
<div class="t" style="left:48.6px;top:145.7px;font-size:4.4px;color:#111;transform-origin:0 0;transform:scaleX(0.810);">K0000</div>
<div class="t" style="left:48.6px;top:151.1px;font-size:4.4px;color:#111;transform-origin:0 0;transform:scaleX(0.810);">K0001</div>
<div class="t" style="left:48.6px;top:156.5px;font-size:4.4px;color:#111;transform-origin:0 0;transform:scaleX(0.810);">K0002</div>
<div class="t" style="left:48.6px;top:161.89999999999998px;font-size:4.4px;color:#111;transform-origin:0 0;transform:scaleX(0.810);">K0003</div>
<div class="t" style="left:48.6px;top:167.29999999999998px;font-size:4.4px;color:#111;transform-origin:0 0;transform:scaleX(0.810);">K0004</div>
<div class="t" style="left:48.6px;top:172.7px;font-size:4.4px;color:#111;transform-origin:0 0;transform:scaleX(0.810);">K0005</div>
<div class="t" style="left:48.6px;top:178.1px;font-size:4.4px;color:#111;transform-origin:0 0;transform:scaleX(0.810);">K0006</div>
<div class="t" style="left:35px;top:183.5px;font-size:4.4px;color:#111;transform-origin:0 0;transform:scaleX(0.618);">Mechanism</div>
<div class="t" style="left:35px;top:188.89999999999998px;font-size:4.4px;color:#111;transform-origin:0 0;transform:scaleX(0.828);">Cam Data</div>
<div class="t" style="left:35px;top:194.29999999999998px;font-size:4.4px;color:#111;transform-origin:0 0;transform:scaleX(0.929);">Label</div>
<div class="t" style="left:35px;top:199.7px;font-size:4.4px;color:#111;transform-origin:0 0;transform:scaleX(0.870);">Struct</div>
<div class="t" style="left:35px;top:205.1px;font-size:4.4px;color:#111;transform-origin:0 0;transform:scaleX(0.753);">Device Memory</div>
<div class="a" style="left:16px;top:258.5px;width:79px;height:5px;background:#f2f1ea"></div>
<div class="a" style="left:20px;top:259.3px;width:62px;height:3.4px;background:linear-gradient(#d6e4fb,#b8cdf2);border-radius:1px"></div>
<div class="t" style="left:16.5px;top:258.3px;font-size:4.5px;color:#5070c0;">&#x2039;</div>
<div class="t" style="left:91px;top:258.3px;font-size:4.5px;color:#5070c0;">&#x203A;</div>
<div class="a" style="left:96px;top:49px;width:351px;height:9.5px;background:linear-gradient(#f9f9f6,#efeee8)"></div>
<div class="a" style="left:97.2px;top:58.2px;width:350px;height:1.4px;background:#a8a494"></div>
<div class="a" style="left:105.5px;top:51.5px;width:30.5px;height:6.7px;background:linear-gradient(#fcfcfa,#e8e7e0);border:0.5px solid #a8b4cc;border-bottom:none;border-radius:1px 1px 0 0"></div>
<div class="a" style="left:107.0px;top:52.8px;width:4px;height:4px;background:#c02020"></div>
<div class="t" style="left:112.0px;top:53px;font-size:4.2px;color:#222;transform-origin:0 0;transform:scaleX(1.014);">System Cfg</div>
<div class="a" style="left:137px;top:51.5px;width:34.5px;height:6.7px;background:linear-gradient(#fcfcfa,#e8e7e0);border:0.5px solid #a8b4cc;border-bottom:none;border-radius:1px 1px 0 0"></div>
<div class="a" style="left:138.5px;top:52.8px;width:4px;height:4px;background:#202020"></div>
<div class="t" style="left:143.5px;top:53px;font-size:4.2px;color:#222;transform-origin:0 0;transform:scaleX(1.054);">SSCNET Cfg</div>
<div class="a" style="left:173px;top:51.5px;width:38.5px;height:6.7px;background:linear-gradient(#fcfcfa,#e8e7e0);border:0.5px solid #a8b4cc;border-bottom:none;border-radius:1px 1px 0 0"></div>
<div class="a" style="left:174.5px;top:52.8px;width:4px;height:4px;background:#c0c0c0"></div>
<div class="t" style="left:179.5px;top:53px;font-size:4.2px;color:#222;transform-origin:0 0;transform:scaleX(1.179);">Mech page01</div>
<div class="a" style="left:210.5px;top:51.2px;width:71px;height:7px;background:linear-gradient(#fdeac0,#f8d488);border:0.5px solid #d8a850;border-bottom:none;border-radius:2px 1px 0 0"></div>
<div class="a" style="left:215.5px;top:52.6px;width:4.5px;height:4.5px;background:linear-gradient(135deg,#a0c080,#406020)"></div>
<div class="t" style="left:222px;top:53px;font-size:4.4px;color:#111;transform-origin:0 0;transform:scaleX(0.907);">Motion SFC 0:X-Y Counter</div>
<div class="a" style="left:274.5px;top:52.6px;width:4.5px;height:4.2px;border:0.5px solid #c8a870;background:#fbe4b0"></div>
<div class="t" style="left:275.6px;top:52.6px;font-size:3.8px;color:#888;">x</div>
<div class="t" style="left:432px;top:53.2px;font-size:2.8px;color:#333;">&#x25C4;&#x25BA;&nbsp;&#x25BC;</div>
<div class="a" style="left:97px;top:58px;width:233px;height:205px;background:#fff"></div>
<div class="a" style="left:97.2px;top:58.2px;width:1.4px;height:205px;background:#a29e8e"></div>
<div class="a" style="left:98.4px;top:59.8px;width:4.8px;height:4.8px;background:linear-gradient(135deg,#e8e8a0,#909048);border:0.5px solid #707050"></div>
<div class="a" style="left:323.8px;top:59.6px;width:5.8px;height:203.4px;background:linear-gradient(90deg,#f6f5f0,#fbfbf8)"></div>
<div class="a" style="left:324.2px;top:84.8px;width:5px;height:120px;background:linear-gradient(90deg,#c4d4f8,#b0c4f0);border-radius:1px"></div>
<div class="t" style="left:325.2px;top:60.8px;font-size:3px;color:#4a6ac0;">&#x25B2;</div>
<div class="t" style="left:325.2px;top:258.6px;font-size:3px;color:#4a6ac0;">&#x25BC;</div>
<div class="a" style="left:97.2px;top:262.8px;width:234px;height:1.2px;background:#a8a494"></div>
<div class="a" style="left:330px;top:58px;width:117px;height:205px;background:#f3f2ec"></div>
<div class="a" style="left:331px;top:58.5px;width:116px;height:204px;background:#fff;border:1px solid #aca899;border-right:none"></div>
<div class="a" style="left:331px;top:58.5px;width:116px;height:1.5px;background:#9c9888"></div>
<svg class="a" style="left:0;top:0" width="659" height="413" viewBox="0 0 659 413">
<defs><linearGradient id="bx" x1="0" y1="0" x2="0" y2="1"><stop offset="0" stop-color="#e9ecf5"/><stop offset="0.35" stop-color="#f8f9fc"/><stop offset="1" stop-color="#dfe3ee"/></linearGradient><clipPath id="edclip"><rect x="98" y="59" width="226" height="204"/></clipPath></defs>
<g clip-path="url(#edclip)">
<line x1="131.6" y1="59" x2="131.6" y2="263" stroke="#6f84b4" stroke-width="1.1"/>
<line x1="131.6" y1="91.8" x2="188.8" y2="91.8" stroke="#6f84b4" stroke-width="1.1"/>
<line x1="188.8" y1="91.8" x2="188.8" y2="97" stroke="#6f84b4" stroke-width="1.1"/>
<line x1="188.8" y1="129" x2="188.8" y2="135.2" stroke="#6f84b4" stroke-width="1.1"/>
<line x1="131.6" y1="135.2" x2="188.8" y2="135.2" stroke="#6f84b4" stroke-width="1.1"/>
<line x1="151" y1="168" x2="188.8" y2="168" stroke="#6f84b4" stroke-width="1.1"/>
<line x1="188.8" y1="168" x2="188.8" y2="184" stroke="#6f84b4" stroke-width="1.1"/>
<line x1="188.8" y1="195" x2="188.8" y2="210.5" stroke="#6f84b4" stroke-width="1.1"/>
<line x1="188.8" y1="210.5" x2="192" y2="210.5" stroke="#6f84b4" stroke-width="1.1"/>
<path d="M132.5,144.5 L135.2,146.2 L132.5,148 Z" fill="#2a3f80"/>
<path d="M189.5,209 L192.2,210.5 L189.5,212 Z" fill="#2a3f80"/>
<rect x="112.4" y="60.0" width="38.2" height="5.0" fill="url(#bx)" stroke="#97a5c8" stroke-width="0.8"/>
<text transform="translate(112.6,67.2) scale(0.85,1)" font-size="7.6" fill="#7a7a7a"></text>
<rect x="112.4" y="75.9" width="38.2" height="10.5" fill="url(#bx)" stroke="#97a5c8" stroke-width="0.8"/>
<rect x="112" y="75.5" width="39" height="1.1" fill="#7b8dbb"/>
<rect x="112" y="85.3" width="39" height="1.5" fill="#7185b6"/>
<text transform="translate(112.6,83.1) scale(0.85,1)" font-size="7.6" fill="#7a7a7a">G2</text>
<rect x="112.4" y="97.2" width="38.2" height="11.0" fill="url(#bx)" stroke="#97a5c8" stroke-width="0.8"/>
<text transform="translate(112.6,104.39999999999999) scale(0.85,1)" font-size="7.6" fill="#7a7a7a">X5</text>
<rect x="169.70000000000002" y="97.2" width="38.2" height="11.0" fill="url(#bx)" stroke="#97a5c8" stroke-width="0.8"/>
<text transform="translate(169.9,104.39999999999999) scale(0.85,1)" font-size="7.6" fill="#7a7a7a">X6</text>
<rect x="112.4" y="119.10000000000001" width="38.2" height="10.0" fill="url(#bx)" stroke="#97a5c8" stroke-width="0.8"/>
<rect x="112" y="118.7" width="39" height="1.1" fill="#7b8dbb"/>
<rect x="112" y="128.0" width="39" height="1.5" fill="#7185b6"/>
<text transform="translate(112.6,126.3) scale(0.85,1)" font-size="7.6" fill="#7a7a7a">G1</text>
<rect x="169.70000000000002" y="119.10000000000001" width="38.2" height="10.0" fill="url(#bx)" stroke="#97a5c8" stroke-width="0.8"/>
<rect x="169.3" y="118.7" width="39" height="1.1" fill="#7b8dbb"/>
<rect x="169.3" y="128.0" width="39" height="1.5" fill="#7185b6"/>
<text transform="translate(169.9,126.3) scale(0.85,1)" font-size="7.6" fill="#7a7a7a">G0</text>
<rect x="135.4" y="140.70000000000002" width="21.8" height="10.899999999999999" fill="url(#bx)" stroke="#97a5c8" stroke-width="0.8"/>
<text transform="translate(135.6,147.9) scale(0.85,1)" font-size="7.6" fill="#7a7a7a">P9</text>
<rect x="112.4" y="163.0" width="38.2" height="10.2" fill="url(#bx)" stroke="#97a5c8" stroke-width="0.8"/>
<rect x="112" y="162.6" width="39" height="1.1" fill="#7b8dbb"/>
<rect x="112" y="172.1" width="39" height="1.5" fill="#7185b6"/>
<text transform="translate(112.6,170.2) scale(0.85,1)" font-size="7.6" fill="#7a7a7a">G3</text>
<rect x="112.4" y="183.9" width="38.2" height="10.899999999999999" fill="url(#bx)" stroke="#97a5c8" stroke-width="0.8"/>
<text transform="translate(112.6,191.1) scale(0.85,1)" font-size="7.6" fill="#7a7a7a">F2</text>
<rect x="169.70000000000002" y="183.9" width="38.2" height="10.899999999999999" fill="url(#bx)" stroke="#97a5c8" stroke-width="0.8"/>
<text transform="translate(169.9,191.1) scale(0.85,1)" font-size="7.6" fill="#7a7a7a">F3</text>
<rect x="112" y="205.2" width="39" height="11" fill="#2f3fe8" stroke="#2233cc" stroke-width="0.6"/>
<text transform="translate(112.6,212.6) scale(0.85,1)" font-size="7.6" fill="#b8c4ff">K0</text>
<rect x="192.4" y="205.4" width="22.2" height="10.5" fill="url(#bx)" stroke="#97a5c8" stroke-width="0.8"/>
<text transform="translate(192.6,212.6) scale(0.85,1)" font-size="7.6" fill="#7a7a7a">P0</text>
<rect x="112.4" y="227.70000000000002" width="38.2" height="10.2" fill="url(#bx)" stroke="#97a5c8" stroke-width="0.8"/>
<rect x="112" y="227.3" width="39" height="1.1" fill="#7b8dbb"/>
<rect x="112" y="236.8" width="39" height="1.5" fill="#7185b6"/>
<text transform="translate(112.6,234.9) scale(0.85,1)" font-size="7.6" fill="#7a7a7a">G0</text>
<rect x="112.4" y="249.0" width="38.2" height="10.6" fill="url(#bx)" stroke="#97a5c8" stroke-width="0.8"/>
<text transform="translate(112.6,256.2) scale(0.85,1)" font-size="7.6" fill="#7a7a7a">K1</text>
<text transform="translate(109,95.4) scale(0.92,1)" font-size="5.6" fill="#666">PAB1</text>
<text transform="translate(109,139.6) scale(0.92,1)" font-size="5.6" fill="#666">PAE1</text>
<text transform="translate(109,161) scale(0.92,1)" font-size="5.6" fill="#666">IFB1</text>
<rect x="152.3" y="205.2" width="9" height="5.8" fill="#e8141c"/>
<text x="153" y="210" font-size="4.5" fill="#ff9090">BP1</text>
<path d="M152.5,214.5 L158,211.8 L158,217.2 Z" fill="#e8141c"/>
</g></svg>
<div class="a" style="left:15px;top:263px;width:432px;height:2px;background:#f3f2ec"></div>
<div class="a" style="left:15px;top:263.8px;width:432px;height:9.4px;background:linear-gradient(#fbfbfc,#ececf0 40%,#d4d4de 80%,#b4b4c2)"></div>
<div class="t" style="left:19px;top:266.8px;font-size:4.4px;color:#111;transform-origin:0 0;transform:scaleX(1.438);font-weight:bold">Output</div>
<div class="a" style="left:15px;top:273px;width:432px;height:65px;background:#fff"></div>
<div class="a" style="left:15px;top:338px;width:432px;height:6px;background:linear-gradient(#f7f6f1,#eceae2)"></div>
<div class="t" style="left:17px;top:338.8px;font-size:4.5px;color:#bbb;">&#x2039;</div>
<div class="a" style="left:15px;top:344px;width:432px;height:1px;background:#c9c8bf"></div>
<div class="a" style="left:15px;top:345px;width:432px;height:6px;background:linear-gradient(#f5f2e4,#e8e5d6)"></div>
<div class="t" style="left:267px;top:346.2px;font-size:4.4px;color:#444;">Q170D&nbsp;&nbsp;&nbsp;&nbsp;SV22&nbsp;&nbsp;&nbsp;&nbsp;Simulation No.2</div>
<!-- dialog -->
<div class="a" style="left:300px;top:111.5px;width:146px;height:97.30000000000001px;background:#7e98e2;border-radius:2px 2px 0 0"></div>
<div class="a" style="left:300px;top:111.5px;width:146px;height:9.5px;background:linear-gradient(#9cb4f0,#7f9ce6 35%,#6e8ee2 80%,#7c9ae6);border-radius:2px 2px 0 0"></div>
<div class="t" style="left:303.7px;top:114px;font-size:5.2px;color:#d8e2ff;transform-origin:0 0;transform:scaleX(0.764);font-weight:bold">Debug Monitor Window</div>
<div class="a" style="left:301.5px;top:121px;width:143px;height:86.30000000000001px;background:#ece9d8"></div>
<div class="a" style="left:304.5px;top:123.5px;width:137.5px;height:22.5px;border:0.6px solid #d0d0bf;border-radius:1.5px"></div>
<div class="a" style="left:306px;top:122.5px;width:48px;height:3px;background:#ece9d8"></div>
<div class="t" style="left:307px;top:123.9px;font-size:4.6px;color:#1a1a1a;transform-origin:0 0;transform:scaleX(0.649);">Debug Command Request - State</div>
<div class="t" style="left:306px;top:129.3px;font-size:4.6px;color:#1a1a1a;transform-origin:0 0;transform:scaleX(0.863);">Program No.</div>
<div class="a" style="left:329px;top:129.3px;width:12.5px;height:4.6px;background:#ece9d8;border:0.7px solid #9c9a8c;border-right-color:#fafaf5;border-bottom-color:#fafaf5"></div>
<div class="a" style="left:344px;top:129.3px;width:35.5px;height:4.6px;background:#ece9d8;border:0.7px solid #9c9a8c;border-right-color:#fafaf5;border-bottom-color:#fafaf5"></div>
<div class="t" style="left:306px;top:138.3px;font-size:4.6px;color:#1a1a1a;transform-origin:0 0;transform:scaleX(0.662);">Command State</div>
<div class="a" style="left:329px;top:138.1px;width:91px;height:4.8px;background:#ece9d8;border:0.7px solid #9c9a8c;border-right-color:#fafaf5;border-bottom-color:#fafaf5"></div>
<div class="t" style="left:330.5px;top:138.4px;font-size:4.6px;color:#1a1a1a;transform-origin:0 0;transform:scaleX(0.673);">00: No Request</div>
<div class="a" style="left:304.5px;top:151px;width:137.5px;height:53px;border:0.6px solid #d0d0bf;border-radius:1.5px"></div>
<div class="a" style="left:306px;top:149.5px;width:30px;height:3px;background:#ece9d8"></div>
<div class="t" style="left:307px;top:149px;font-size:4.0px;color:#1a1a1a;transform-origin:0 0;transform:scaleX(1.306);">Break Point</div>
<div class="t" style="left:316.3px;top:154.2px;font-size:4.6px;color:#1a1a1a;transform-origin:0 0;transform:scaleX(0.888);">&lt; Program &gt;</div>
<div class="t" style="left:365.6px;top:154.2px;font-size:4.6px;color:#1a1a1a;transform-origin:0 0;transform:scaleX(0.882);">&lt; Loop Count(1~32767) &gt;</div>
<div class="t" style="left:316.3px;top:159.5px;font-size:4.6px;color:#1a1a1a;transform-origin:0 0;transform:scaleX(0.740);">No.</div>
<div class="t" style="left:335px;top:159.5px;font-size:4.6px;color:#1a1a1a;transform-origin:0 0;transform:scaleX(0.538);">Name</div>
<div class="t" style="left:370.9px;top:159.5px;font-size:4.6px;color:#1a1a1a;transform-origin:0 0;transform:scaleX(0.970);">Set</div>
<div class="t" style="left:390.9px;top:159.5px;font-size:4.6px;color:#1a1a1a;transform-origin:0 0;transform:scaleX(0.645);">Mon.</div>
<div class="t" style="left:408.2px;top:159.5px;font-size:4.6px;color:#1a1a1a;transform-origin:0 0;transform:scaleX(0.956);">En.</div>
<div class="t" style="left:420.2px;top:159.5px;font-size:4.6px;color:#1a1a1a;transform-origin:0 0;transform:scaleX(0.833);">Dis.</div>
<div class="t" style="left:307px;top:167.1px;font-size:4px;color:#333;transform-origin:0 0;transform:scaleX(0.701);">BP1</div>
<div class="a" style="left:313.9px;top:166.2px;width:8.7px;height:5.6px;background:#ece9d8;border:0.7px solid #9c9a8c;border-right-color:#fafaf5;border-bottom-color:#fafaf5"></div>
<div class="a" style="left:324px;top:166.2px;width:35px;height:5.6px;background:#ece9d8;border:0.7px solid #9c9a8c;border-right-color:#fafaf5;border-bottom-color:#fafaf5"></div>
<div class="a" style="left:360.8px;top:166.2px;width:5.4px;height:5.6px;background:#ece9d8;border:0.7px solid #9c9a8c;border-right-color:#fafaf5;border-bottom-color:#fafaf5"></div>
<div class="a" style="left:368.3px;top:166.2px;width:18.5px;height:5.6px;background:#ece9d8;border:0.7px solid #9c9a8c;border-right-color:#fafaf5;border-bottom-color:#fafaf5"></div>
<div class="a" style="left:383px;top:167.0px;width:3.2px;height:4px;background:#e4e1d2;border-left:0.5px solid #b0ae9e"></div>
<div class="t" style="left:318.5px;top:167.2px;font-size:4px;color:#222;">1</div>
<div class="t" style="left:325px;top:167.1px;font-size:4.2px;color:#222;transform-origin:0 0;transform:scaleX(0.622);">X-Y Count</div>
<div class="a" style="left:388.7px;top:166.2px;width:18.5px;height:5.6px;background:#f01010;border:0.5px solid #a01010"></div>
<div class="a" style="left:413.2px;top:167.0px;width:4px;height:4px;background:#fff;border:0.5px solid #9090a0;border-radius:50%"></div>
<div class="a" style="left:414.4px;top:168.2px;width:1.6px;height:1.6px;background:#333;border-radius:50%"></div>
<div class="a" style="left:420.8px;top:167.0px;width:4px;height:4px;background:#fff;border:0.5px solid #9090a0;border-radius:50%"></div>
<div class="a" style="left:429px;top:166.2px;width:11.6px;height:5.8px;background:linear-gradient(#fff,#e6e4da);border:0.5px solid #7f8ca8;border-radius:1px"></div>
<div class="t" style="left:431px;top:167.1px;font-size:4px;color:#222;transform-origin:0 0;transform:scaleX(0.692);">Delete</div>
<div class="t" style="left:307px;top:174.9px;font-size:4px;color:#333;transform-origin:0 0;transform:scaleX(0.701);">BP2</div>
<div class="a" style="left:313.9px;top:174.0px;width:8.7px;height:5.6px;background:#ece9d8;border:0.7px solid #9c9a8c;border-right-color:#fafaf5;border-bottom-color:#fafaf5"></div>
<div class="a" style="left:324px;top:174.0px;width:35px;height:5.6px;background:#ece9d8;border:0.7px solid #9c9a8c;border-right-color:#fafaf5;border-bottom-color:#fafaf5"></div>
<div class="a" style="left:360.8px;top:174.0px;width:5.4px;height:5.6px;background:#ece9d8;border:0.7px solid #9c9a8c;border-right-color:#fafaf5;border-bottom-color:#fafaf5"></div>
<div class="a" style="left:368.3px;top:174.0px;width:18.5px;height:5.6px;background:#ece9d8;border:0.7px solid #9c9a8c;border-right-color:#fafaf5;border-bottom-color:#fafaf5"></div>
<div class="a" style="left:383px;top:174.8px;width:3.2px;height:4px;background:#e4e1d2;border-left:0.5px solid #b0ae9e"></div>
<div class="a" style="left:388.7px;top:174.0px;width:18.5px;height:5.6px;background:#c8c6c0;border:0.5px solid #b0aea6"></div>
<div class="a" style="left:413.2px;top:174.8px;width:4px;height:4px;background:#f4f2ea;border:0.5px solid #c0bfb0;border-radius:50%"></div>
<div class="a" style="left:420.8px;top:174.8px;width:4px;height:4px;background:#f4f2ea;border:0.5px solid #c0bfb0;border-radius:50%"></div>
<div class="a" style="left:429px;top:174.0px;width:11.6px;height:5.8px;background:#f0eee4;border:0.5px solid #c8c6b8;border-radius:1px"></div>
<div class="t" style="left:431px;top:174.9px;font-size:4px;color:#c0beb0;transform-origin:0 0;transform:scaleX(0.692);">Delete</div>
<div class="t" style="left:307px;top:182.70000000000002px;font-size:4px;color:#333;transform-origin:0 0;transform:scaleX(0.701);">BP3</div>
<div class="a" style="left:313.9px;top:181.8px;width:8.7px;height:5.6px;background:#ece9d8;border:0.7px solid #9c9a8c;border-right-color:#fafaf5;border-bottom-color:#fafaf5"></div>
<div class="a" style="left:324px;top:181.8px;width:35px;height:5.6px;background:#ece9d8;border:0.7px solid #9c9a8c;border-right-color:#fafaf5;border-bottom-color:#fafaf5"></div>
<div class="a" style="left:360.8px;top:181.8px;width:5.4px;height:5.6px;background:#ece9d8;border:0.7px solid #9c9a8c;border-right-color:#fafaf5;border-bottom-color:#fafaf5"></div>
<div class="a" style="left:368.3px;top:181.8px;width:18.5px;height:5.6px;background:#ece9d8;border:0.7px solid #9c9a8c;border-right-color:#fafaf5;border-bottom-color:#fafaf5"></div>
<div class="a" style="left:383px;top:182.60000000000002px;width:3.2px;height:4px;background:#e4e1d2;border-left:0.5px solid #b0ae9e"></div>
<div class="a" style="left:388.7px;top:181.8px;width:18.5px;height:5.6px;background:#dddbd2;border:0.5px solid #c8c6bb"></div>
<div class="t" style="left:307px;top:190.5px;font-size:4px;color:#333;transform-origin:0 0;transform:scaleX(0.701);">BP4</div>
<div class="a" style="left:313.9px;top:189.6px;width:8.7px;height:5.6px;background:#ece9d8;border:0.7px solid #9c9a8c;border-right-color:#fafaf5;border-bottom-color:#fafaf5"></div>
<div class="a" style="left:324px;top:189.6px;width:35px;height:5.6px;background:#ece9d8;border:0.7px solid #9c9a8c;border-right-color:#fafaf5;border-bottom-color:#fafaf5"></div>
<div class="a" style="left:360.8px;top:189.6px;width:5.4px;height:5.6px;background:#ece9d8;border:0.7px solid #9c9a8c;border-right-color:#fafaf5;border-bottom-color:#fafaf5"></div>
<div class="a" style="left:368.3px;top:189.6px;width:18.5px;height:5.6px;background:#ece9d8;border:0.7px solid #9c9a8c;border-right-color:#fafaf5;border-bottom-color:#fafaf5"></div>
<div class="a" style="left:383px;top:190.4px;width:3.2px;height:4px;background:#e4e1d2;border-left:0.5px solid #b0ae9e"></div>
<div class="a" style="left:388.7px;top:189.6px;width:18.5px;height:5.6px;background:#dddbd2;border:0.5px solid #c8c6bb"></div>
<div class="t" style="left:311px;top:196px;font-size:4.6px;color:#1a1a1a;transform-origin:0 0;transform:scaleX(0.789);">* Double-click the steps you want to break on (covered)</div>
<!-- sim -->
<div class="a" style="left:345px;top:224.2px;width:39px;height:73.40000000000003px;background:#7e98e2;border-radius:2px 0 0 0"></div>
<div class="a" style="left:345px;top:224.2px;width:39px;height:8px;background:linear-gradient(#9cb4f0,#7f9ce6 35%,#6e8ee2 80%,#7c9ae6);border-radius:2px 0 0 0"></div>
<div class="a" style="left:347.1px;top:225.8px;width:4.4px;height:4.4px;background:#3050c0;border:0.8px solid #e8eeff;border-radius:0.8px"></div>
<div class="t" style="left:353px;top:226.4px;font-size:4.6px;color:#f0f4ff;font-weight:bold;letter-spacing:0.3px">MT Simulator</div>
<div class="a" style="left:346.5px;top:232px;width:37.5px;height:64.3px;background:#ece9d8"></div>
<div class="a" style="left:346.5px;top:232px;width:37.5px;height:8px;background:#f0eee2"></div>
<div class="t" style="left:350.5px;top:234.8px;font-size:4.6px;color:#222;transform-origin:0 0;transform:scaleX(1.055);">Tool(T)</div>
<div class="a" style="left:346.5px;top:240px;width:37.5px;height:0.7px;background:#d0cdbd"></div>
<div class="a" style="left:350.8px;top:244.8px;width:40px;height:23.8px;border:0.6px solid #d0cdbf;border-radius:1px"></div>
<div class="a" style="left:352px;top:242.5px;width:8px;height:3px;background:#ece9d8"></div>
<div class="t" style="left:354.5px;top:243px;font-size:4.4px;color:#222;transform-origin:0 0;transform:scaleX(0.759);">LED</div>
<div class="a" style="left:362px;top:249px;width:25px;height:17.6px;background:#050505"></div>
<svg class="a" style="left:362px;top:249px" width="24" height="18" viewBox="362 249 24 18"><line x1="366.5" y1="251.8" x2="372.0" y2="251.8" stroke="#383838" stroke-width="1.3" stroke-linecap="round"/><line x1="372.5" y1="252.3" x2="372.5" y2="257.8" stroke="#383838" stroke-width="1.3" stroke-linecap="round"/><line x1="372.5" y1="259.2" x2="372.5" y2="264.7" stroke="#383838" stroke-width="1.3" stroke-linecap="round"/><line x1="366.5" y1="265.2" x2="372.0" y2="265.2" stroke="#383838" stroke-width="1.3" stroke-linecap="round"/><line x1="366.0" y1="259.2" x2="366.0" y2="264.7" stroke="#f01818" stroke-width="1.3" stroke-linecap="round"/><line x1="366.0" y1="252.3" x2="366.0" y2="257.8" stroke="#383838" stroke-width="1.3" stroke-linecap="round"/><line x1="366.5" y1="258.5" x2="372.0" y2="258.5" stroke="#f01818" stroke-width="1.3" stroke-linecap="round"/><circle cx="374.5" cy="265.2" r="0.7" fill="#383838"/><line x1="378" y1="251.8" x2="383.5" y2="251.8" stroke="#383838" stroke-width="1.3" stroke-linecap="round"/><line x1="384" y1="252.3" x2="384" y2="257.8" stroke="#383838" stroke-width="1.3" stroke-linecap="round"/><line x1="384" y1="259.2" x2="384" y2="264.7" stroke="#383838" stroke-width="1.3" stroke-linecap="round"/><line x1="378" y1="265.2" x2="383.5" y2="265.2" stroke="#f01818" stroke-width="1.3" stroke-linecap="round"/><line x1="377.5" y1="259.2" x2="377.5" y2="264.7" stroke="#f01818" stroke-width="1.3" stroke-linecap="round"/><line x1="377.5" y1="252.3" x2="377.5" y2="257.8" stroke="#383838" stroke-width="1.3" stroke-linecap="round"/><line x1="378" y1="258.5" x2="383.5" y2="258.5" stroke="#f01818" stroke-width="1.3" stroke-linecap="round"/></svg>
<div class="a" style="left:350.5px;top:273.8px;width:40px;height:10.5px;border:0.6px solid #d0cdbf;border-radius:1px"></div>
<div class="a" style="left:352px;top:272.5px;width:14px;height:3px;background:#ece9d8"></div>
<div class="t" style="left:352px;top:271.8px;font-size:4.0px;color:#1a1a1a;transform-origin:0 0;transform:scaleX(1.103);">Switch</div>
<div class="a" style="left:351.8px;top:276.6px;width:3.8px;height:3.8px;background:#f4f2ea;border:0.6px solid #b8b6a8;border-radius:50%"></div>
<div class="t" style="left:357px;top:277px;font-size:3.8px;color:#b8b6a8;transform-origin:0 0;transform:scaleX(0.868);">RESET</div>
<div class="a" style="left:376.5px;top:276.6px;width:3.8px;height:3.8px;background:#f4f2ea;border:0.6px solid #b8b6a8;border-radius:50%"></div>
<!-- scope -->
<div class="a" style="left:385px;top:188px;width:270px;height:210.5px;background:rgba(0,0,0,0.13);filter:blur(1.5px)"></div>
<div class="a" style="left:382px;top:185px;width:270px;height:210.3px;background:#0a34b8;border-radius:1px 1px 0 0"></div>
<div class="a" style="left:382px;top:185px;width:270px;height:5.6px;background:linear-gradient(#3d86f8,#0a58ea 30%,#0552e4 70%,#0d58e8);border-radius:1px 1px 0 0"></div>
<div class="a" style="left:383.3px;top:186.4px;width:2.6px;height:3px;background:#c8d8ff"></div>
<div class="t" style="left:386px;top:186.3px;font-size:3.8px;color:#f0f4ff;transform-origin:0 0;transform:scaleX(0.790);">Digital Oscillo - MT Developer2</div>
<div class="a" style="left:635.8px;top:185.9px;width:4.6px;height:4.3px;background:linear-gradient(135deg,#8ab8fa,#3a78ee);border-radius:0.5px"></div>
<div class="a" style="left:636.8px;top:188.9px;width:2px;height:0.6px;background:#fff"></div>
<div class="a" style="left:640.9px;top:185.9px;width:4.6px;height:4.3px;background:linear-gradient(135deg,#8ab8fa,#3a78ee);border-radius:0.5px"></div>
<div class="a" style="left:642px;top:187px;width:2.2px;height:2px;border:0.5px solid #fff"></div>
<div class="a" style="left:646px;top:185.9px;width:4.6px;height:4.3px;background:linear-gradient(135deg,#f8a070,#e05020);border-radius:0.5px"></div>
<svg class="a" style="left:646px;top:185.9px" width="4.6" height="4.3" viewBox="0 0 4.6 4.3"><path d="M1.2,1 L3.4,3.3 M3.4,1 L1.2,3.3" stroke="#fff" stroke-width="0.7"/></svg>
<div class="a" style="left:383.2px;top:190.8px;width:267.40000000000003px;height:202.8px;background:#ece9d8"></div>
<div class="a" style="left:383.2px;top:190.8px;width:267.40000000000003px;height:5px;background:#f2f0e6"></div>
<div class="t" style="left:384.2px;top:191.2px;font-size:3.2px;color:#333;transform-origin:0 0;transform:scaleX(1.114);">File(F)</div>
<div class="t" style="left:397px;top:191.2px;font-size:3.2px;color:#333;transform-origin:0 0;transform:scaleX(0.869);">Edit(E)</div>
<div class="t" style="left:408px;top:191.2px;font-size:3.2px;color:#333;transform-origin:0 0;transform:scaleX(0.763);">View(V)</div>
<div class="t" style="left:420px;top:191.2px;font-size:3.2px;color:#333;transform-origin:0 0;transform:scaleX(0.912);">Action(A)</div>
<div class="t" style="left:435.8px;top:191.2px;font-size:3.2px;color:#333;transform-origin:0 0;transform:scaleX(0.868);">Option(O)</div>
<div class="t" style="left:451px;top:191.2px;font-size:3.2px;color:#333;transform-origin:0 0;transform:scaleX(0.816);">Help(H)</div>
<div class="a" style="left:383.2px;top:195.8px;width:267.40000000000003px;height:6.3px;background:linear-gradient(#f6f5ee,#e8e6da)"></div>
<div class="a" style="left:385px;top:197px;width:4px;height:4px;background:#808020;border-radius:0.5px;opacity:0.85"></div>
<div class="a" style="left:390.5px;top:197px;width:4px;height:4px;background:#c0c0c0;border-radius:0.5px;opacity:0.85"></div>
<div class="a" style="left:396.5px;top:197px;width:4px;height:4px;background:#c03040;border-radius:0.5px;opacity:0.85"></div>
<div class="a" style="left:401.5px;top:197px;width:4px;height:4px;background:#c03040;border-radius:0.5px;opacity:0.85"></div>
<div class="a" style="left:406.5px;top:197px;width:4px;height:4px;background:#c03040;border-radius:0.5px;opacity:0.85"></div>
<div class="a" style="left:412px;top:197px;width:4px;height:4px;background:#202020;border-radius:0.5px;opacity:0.85"></div>
<div class="a" style="left:417px;top:197px;width:4px;height:4px;background:#20a080;border-radius:0.5px;opacity:0.85"></div>
<div class="a" style="left:422px;top:197px;width:4px;height:4px;background:#a02020;border-radius:0.5px;opacity:0.85"></div>
<div class="a" style="left:427.5px;top:197px;width:4px;height:4px;background:#c02020;border-radius:0.5px;opacity:0.85"></div>
<div class="a" style="left:432.5px;top:197px;width:4px;height:4px;background:#5050c0;border-radius:0.5px;opacity:0.85"></div>
<div class="a" style="left:438px;top:197px;width:4px;height:4px;background:#b0b0b0;border-radius:0.5px;opacity:0.85"></div>
<div class="a" style="left:443.5px;top:197px;width:4px;height:4px;background:#d02020;border-radius:0.5px;opacity:0.85"></div>
<div class="a" style="left:448.5px;top:196.2px;width:137px;height:4.2px;background:#fff;border:0.5px solid #9a9890"></div>
<div class="a" style="left:383.2px;top:202.1px;width:267.40000000000003px;height:5px;background:#ece9d8"></div>
<div class="a" style="left:384.2px;top:202.6px;width:32.2px;height:3.8px;background:linear-gradient(#f0fbec,#d4efc8);border:0.5px solid #a8d098"></div>
<div class="t" style="left:393px;top:203.1px;font-size:2.8px;color:#444;">Ax. Scale Restore</div>
<div class="a" style="left:418.6px;top:202.6px;width:30.6px;height:3.8px;background:linear-gradient(#f0fbec,#d4efc8);border:0.5px solid #a8d098"></div>
<div class="t" style="left:425px;top:203.1px;font-size:2.8px;color:#444;">Ax. Disp Restore</div>
<div class="a" style="left:456.4px;top:202.4px;width:3.5px;height:3.4px;background:#a8a050;border:0.4px solid #706a20;border-radius:0.5px"></div>
<div class="a" style="left:460px;top:202.6px;width:14px;height:3px;background:#fff"></div>
<div class="a" style="left:475px;top:202.4px;width:4px;height:3.4px;background:#a8a050;border:0.4px solid #706a20;border-radius:0.5px"></div>
<div class="a" style="left:479px;top:202.6px;width:14px;height:3px;background:#fff"></div>
<div class="a" style="left:493.7px;top:202.4px;width:7.3px;height:3.4px;background:#a8a050;border:0.4px solid #706a20;border-radius:0.5px"></div>
<div class="a" style="left:501px;top:202.6px;width:14px;height:3px;background:#fff"></div>
<div class="a" style="left:515.6px;top:202.4px;width:4.4px;height:3.4px;background:#a8a050;border:0.4px solid #706a20;border-radius:0.5px"></div>
<div class="a" style="left:520px;top:202.6px;width:14px;height:3px;background:#fff"></div>
<div class="a" style="left:535.6px;top:202.4px;width:7.4px;height:3.4px;background:#a8a050;border:0.4px solid #706a20;border-radius:0.5px"></div>
<div class="a" style="left:543px;top:202.6px;width:15px;height:3px;background:#fff"></div>
<div class="t" style="left:555px;top:202.7px;font-size:2.8px;color:#444;">[ms]</div>
<div class="a" style="left:383.2px;top:207px;width:267.40000000000003px;height:181.5px;background:#e6e2dd"></div>
<div class="a" style="left:383.2px;top:207px;width:267.40000000000003px;height:0.6px;background:#c8c4b8"></div>
<div class="a" style="left:432.2px;top:208.2px;width:74.3px;height:5px;background:#fff;border:0.4px solid #d8d4cc"></div>
<div class="a" style="left:455px;top:208.6px;width:28.7px;height:4.4px;background:#000"></div>
<div class="a" style="left:455.8px;top:208.6px;width:0.8px;height:4.4px;background:#e0208a"></div>
<div class="a" style="left:463.4px;top:208.6px;width:0.6px;height:4.4px;background:#b0a020"></div>
<div class="a" style="left:482.2px;top:208.6px;width:0.8px;height:4.4px;background:#20c040"></div>
<div class="a" style="left:432px;top:217.2px;width:214.5px;height:0.8px;background:#7a7670"></div>
<div class="a" style="left:449.6px;top:214.2px;width:4px;height:4px;background:#a8a040;border:0.5px solid #5c5810;border-radius:0.8px 0.8px 50% 50%"></div>
<div class="a" style="left:494.3px;top:214.2px;width:4px;height:4px;background:#a8a040;border:0.5px solid #5c5810;border-radius:0.8px 0.8px 50% 50%"></div>
<div class="a" style="left:625.5px;top:214.2px;width:4px;height:4px;background:#a8a040;border:0.5px solid #5c5810;border-radius:0.8px 0.8px 50% 50%"></div>
<div class="a" style="left:432px;top:219.5px;width:214px;height:112.10000000000002px;background:#000"></div>
<svg class="a" style="left:432px;top:219.5px" width="214" height="112.10000000000002" viewBox="432 219.5 214 112.10000000000002"><line x1="496.3" y1="219.5" x2="496.3" y2="331.6" stroke="#4a4a30" stroke-width="0.6" stroke-dasharray="1,1"/><line x1="565.8" y1="219.5" x2="565.8" y2="331.6" stroke="#4a4a30" stroke-width="0.6" stroke-dasharray="1,1"/><line x1="637.5" y1="219.5" x2="637.5" y2="331.6" stroke="#4a4a30" stroke-width="0.6" stroke-dasharray="1,1"/><line x1="432" y1="254.5" x2="646" y2="254.5" stroke="#5a5a20" stroke-width="0.7"/><line x1="432" y1="297.2" x2="646" y2="297.2" stroke="#5a5a20" stroke-width="0.7"/><line x1="451.5" y1="219.5" x2="451.5" y2="331.6" stroke="#b02060" stroke-width="0.8"/><line x1="627.3" y1="219.5" x2="627.3" y2="331.6" stroke="#20a030" stroke-width="0.8"/><line x1="432" y1="270.2" x2="646" y2="243.5" stroke="#1a2878" stroke-width="0.9"/><polyline points="432,225.4 480.8,225.4 497.5,275 512.8,326.3 646,326.3" fill="none" stroke="#b09a94" stroke-width="0.8"/><polyline points="432,235.9 495.5,235.9 495.5,229.6 498.3,229.6 498.3,235.9 646,235.9" fill="none" stroke="#c8c8c8" stroke-width="1.1"/><polyline points="432,249.2 496.7,249.2 496.7,242.5 498,242.5 498,249.2 646,249.2" fill="none" stroke="#a0a0a0" stroke-width="0.8"/><polyline points="432,247.2 481.3,247.2 495.8,329 498.8,329 513.3,247.2 646,247.2" fill="none" stroke="#f0f020" stroke-width="1.8" stroke-linejoin="round"/></svg>
<div class="a" style="left:429.4px;top:252.4px;width:4.4px;height:4.4px;background:#a8a040;border:0.5px solid #5c5810;border-radius:50%"></div>
<div class="a" style="left:429.4px;top:295.2px;width:4.4px;height:4.4px;background:#a8a040;border:0.5px solid #5c5810;border-radius:50%"></div>
<div class="a" style="left:384.8px;top:215.6px;width:7.2px;height:2.2px;background:#2050c0"></div>
<div class="a" style="left:384.4px;top:220.8px;width:6.2px;height:5.2px;background:#e8f020;border:0.5px solid #8c8c88"></div>
<div class="a" style="left:391.4px;top:222.3px;width:2.6px;height:2.2px;background:#b8b4ac"></div>
<div class="a" style="left:384.4px;top:227px;width:6.2px;height:5.2px;background:#f4b8c0;border:0.5px solid #8c8c88"></div>
<div class="a" style="left:391.4px;top:228.5px;width:2.6px;height:2.2px;background:#b8b4ac"></div>
<div class="a" style="left:384.4px;top:233.9px;width:6.2px;height:5.2px;background:#1010e0;border:0.5px solid #8c8c88"></div>
<div class="a" style="left:391.4px;top:235.4px;width:2.6px;height:2.2px;background:#b8b4ac"></div>
<div class="a" style="left:384.4px;top:240.3px;width:6.2px;height:5.2px;background:#909090;border:0.5px solid #8c8c88"></div>
<div class="a" style="left:391.4px;top:241.8px;width:2.6px;height:2.2px;background:#b8b4ac"></div>
<div class="a" style="left:384.4px;top:246.8px;width:6.2px;height:5.2px;background:#909090;border:0.5px solid #8c8c88"></div>
<div class="a" style="left:391.4px;top:248.3px;width:2.6px;height:2.2px;background:#b8b4ac"></div>
<div class="a" style="left:384.4px;top:253.2px;width:6.2px;height:5.2px;background:#909090;border:0.5px solid #8c8c88"></div>
<div class="a" style="left:391.4px;top:254.7px;width:2.6px;height:2.2px;background:#b8b4ac"></div>
<div class="a" style="left:384.4px;top:259.6px;width:6.2px;height:5.2px;background:#909090;border:0.5px solid #8c8c88"></div>
<div class="a" style="left:391.4px;top:261.1px;width:2.6px;height:2.2px;background:#b8b4ac"></div>
<div class="a" style="left:384.4px;top:266px;width:6.2px;height:5.2px;background:#909090;border:0.5px solid #8c8c88"></div>
<div class="a" style="left:391.4px;top:267.5px;width:2.6px;height:2.2px;background:#b8b4ac"></div>
<div class="a" style="left:396px;top:215.8px;width:13px;height:2.8px;background:#fff;border:0.4px solid #ccc"></div>
<div class="a" style="left:395px;top:220.2px;width:13.6px;height:111px;background:#fff;border:0.5px solid #b8b4ac"></div>
<div class="a" style="left:401px;top:221.5px;width:6px;height:1px;background:#888"></div>
<div class="a" style="left:401px;top:246.5px;width:4px;height:0.8px;background:#999"></div>
<div class="a" style="left:412.2px;top:220.2px;width:4.2px;height:111px;background:#e4e0d8;border:0.4px solid #c8c4bc"></div>
<div class="t" style="left:413px;top:221px;font-size:2.6px;color:#777;">&#x25B2;</div>
<div class="a" style="left:419.4px;top:215.8px;width:5px;height:2.2px;background:#2050c0"></div>
<div class="a" style="left:419.2px;top:219px;width:6.5px;height:113px;background:#d8d4cc;border-left:0.5px solid #b0aca4"></div>
<div class="a" style="left:421.4px;top:233.9px;width:4px;height:4px;background:#9ee0a0;border:0.4px solid #70a070"></div>
<div class="a" style="left:421.4px;top:247px;width:4px;height:4px;background:#9090f0;border:0.4px solid #6060a0"></div>
<div class="a" style="left:412.2px;top:322.2px;width:4.6px;height:4.2px;background:#7090e8;border:0.4px solid #4060c0"></div>
<div class="a" style="left:412.2px;top:327.8px;width:4.6px;height:4.2px;background:#7090e8;border:0.4px solid #4060c0"></div>
<div class="a" style="left:425px;top:219px;width:1px;height:113px;background:#b8c8e8"></div>
<div class="a" style="left:420.5px;top:226px;width:2.5px;height:0.6px;background:#707070"></div>
<div class="a" style="left:420.5px;top:240px;width:2.5px;height:0.6px;background:#707070"></div>
<div class="a" style="left:420.5px;top:254px;width:2.5px;height:0.6px;background:#707070"></div>
<div class="a" style="left:420.5px;top:268px;width:2.5px;height:0.6px;background:#707070"></div>
<div class="a" style="left:420.5px;top:282px;width:2.5px;height:0.6px;background:#707070"></div>
<div class="a" style="left:420.5px;top:296px;width:2.5px;height:0.6px;background:#707070"></div>
<div class="a" style="left:420.5px;top:310px;width:2.5px;height:0.6px;background:#707070"></div>
<div class="a" style="left:420.5px;top:324px;width:2.5px;height:0.6px;background:#707070"></div>
<div class="a" style="left:412.6px;top:316.5px;width:3.8px;height:3.5px;background:#fff;border:0.4px solid #aaa"></div>
<div class="a" style="left:408.6px;top:220.2px;width:1px;height:111px;background:#d8d0a0"></div>
<div class="a" style="left:385.3px;top:334px;width:2px;height:2px;background:#38b838;border-radius:50%"></div>
<div class="t" style="left:388px;top:333.6px;font-size:3px;color:#1a3aa0;transform-origin:0 0;transform:scaleX(1.066);font-weight:bold;text-decoration:underline">Scale</div>
<div class="a" style="left:396px;top:333.2px;width:18px;height:3.4px;background:#fff;border:0.5px solid #a8a49c"></div>
<div class="t" style="left:409.5px;top:333.9px;font-size:2.2px;color:#333;">&#x25BC;</div>
<div class="a" style="left:414px;top:333px;width:8px;height:3.8px;background:linear-gradient(#eceae2,#cfcbc0);border:0.4px solid #b0ac9c"></div>
<div class="a" style="left:429.6px;top:338px;width:218.4px;height:4.6px;background:#fff"></div>
<div class="t" style="left:489px;top:338.8px;font-size:2.4px;color:#555;">5.00:1</div>
<div class="t" style="left:564px;top:338.8px;font-size:2.4px;color:#555;">5.00:1</div>
<div class="a" style="left:383.2px;top:337.5px;width:46.5px;height:5px;background:#e6e2dc"></div>
<div class="a" style="left:383.2px;top:342.6px;width:267.40000000000003px;height:9.6px;background:#dedad4"></div>
<div class="a" style="left:443.5px;top:343.4px;width:204px;height:4px;background:linear-gradient(90deg,#f0ede0,#f6f4ea 30%,#fbfaf4);border:0.4px solid #c8c4b0"></div>
<div class="t" style="left:444.3px;top:344.2px;font-size:2.2px;color:#333;">&#x25C4;</div>
<div class="t" style="left:644.5px;top:344.2px;font-size:2.2px;color:#333;">&#x25BA;</div>
<div class="a" style="left:385.3px;top:344.6px;width:2px;height:2px;background:#38b838;border-radius:50%"></div>
<div class="t" style="left:388px;top:344.1px;font-size:3px;color:#1a3aa0;transform-origin:0 0;transform:scaleX(1.764);font-weight:bold;text-decoration:underline">Status</div>
<div class="a" style="left:404.3px;top:343.8px;width:22px;height:3.6px;background:#fff;border:0.4px solid #aaa"></div>
<div class="t" style="left:406px;top:344.5px;font-size:2.6px;color:#333;transform-origin:0 0;transform:scaleX(0.854);">Unlaunch STOP</div>
<div class="a" style="left:430.4px;top:343.6px;width:5.4px;height:3.8px;background:linear-gradient(#8cb0f0,#4a78d0);border:0.4px solid #3050a0"></div>
<div class="a" style="left:436px;top:343.6px;width:5.4px;height:3.8px;background:linear-gradient(#8cb0f0,#4a78d0);border:0.4px solid #3050a0"></div>
<div class="a" style="left:385.3px;top:349.6px;width:2px;height:2px;background:#38b838;border-radius:50%"></div>
<div class="t" style="left:388px;top:349.1px;font-size:3px;color:#1a3aa0;transform-origin:0 0;transform:scaleX(0.902);font-weight:bold;text-decoration:underline">Command Mode</div>
<div class="t" style="left:410.5px;top:349.4px;font-size:2.8px;color:#333;transform-origin:0 0;transform:scaleX(1.016);">Trigger&nbsp; Source</div>
<div class="a" style="left:430.5px;top:348.6px;width:21.8px;height:3.4px;background:#fff"></div>
<div class="t" style="left:454px;top:349.4px;font-size:2.8px;color:#333;transform-origin:0 0;transform:scaleX(1.034);">Finish&nbsp; Time</div>
<div class="a" style="left:470.5px;top:348.6px;width:50px;height:3.4px;background:#fff"></div>
<div class="a" style="left:383.2px;top:352.2px;width:267.40000000000003px;height:36.5px;background:#ece9d8"></div>
<svg class="a" style="left:383px;top:352px" width="42" height="38" viewBox="383 352 42 38"><defs><radialGradient id="jg" cx="0.5" cy="0.4" r="0.6"><stop offset="0" stop-color="#a8c0f0"/><stop offset="0.6" stop-color="#5a80d0"/><stop offset="1" stop-color="#3a60b8"/></radialGradient></defs><ellipse cx="397.7" cy="364.6" rx="8.8" ry="8.6" fill="url(#jg)" stroke="#3458a8" stroke-width="0.5"/><ellipse cx="397.7" cy="364.6" rx="4.6" ry="4.4" fill="#7a9ce0" stroke="#dce8ff" stroke-width="0.7"/><path d="M391.6,358.6 L403.8,370.6 M403.8,358.6 L391.6,370.6" stroke="#e8f0ff" stroke-width="0.9"/><circle cx="397.7" cy="364.6" r="1.6" fill="#c8d8f8"/><rect x="410.6" y="356.6" width="10.2" height="4.1" rx="0.8" fill="#5a84d8" stroke="#3458a8" stroke-width="0.5"/><rect x="412.1" y="358.1" width="7.199999999999999" height="1.1" fill="#d8e4ff" opacity="0.8"/><rect x="410.6" y="362.6" width="10.2" height="4.1" rx="0.8" fill="#5a84d8" stroke="#3458a8" stroke-width="0.5"/><rect x="412.1" y="364.1" width="7.199999999999999" height="1.1" fill="#d8e4ff" opacity="0.8"/><rect x="387.6" y="375" width="9.7" height="4.6" rx="0.8" fill="#5a84d8" stroke="#3458a8" stroke-width="0.5"/><rect x="389.1" y="376.5" width="6.699999999999999" height="1.1" fill="#d8e4ff" opacity="0.8"/><rect x="399.1" y="375" width="9.7" height="4.6" rx="0.8" fill="#5a84d8" stroke="#3458a8" stroke-width="0.5"/><rect x="400.6" y="376.5" width="6.699999999999999" height="1.1" fill="#d8e4ff" opacity="0.8"/><rect x="411" y="369" width="4.7" height="4.6" rx="1.8" fill="#8c8a28" stroke="#5c5a10" stroke-width="0.4"/><rect x="412.6" y="370.3" width="1.6" height="2" fill="#e8e060"/><rect x="411" y="375.5" width="4.7" height="4.6" rx="1.8" fill="#8c8a28" stroke="#5c5a10" stroke-width="0.4"/><rect x="412.6" y="376.8" width="1.6" height="2" fill="#e8e060"/><path d="M388,381.5 h5.2 v3 q-2.6,2.4 -5.2,0 z" fill="#8c8a28" stroke="#5c5a10" stroke-width="0.4"/><rect x="389.9" y="382.6" width="1.4" height="2" fill="#e8e060"/><path d="M395.5,381.5 h5.2 v3 q-2.6,2.4 -5.2,0 z" fill="#8c8a28" stroke="#5c5a10" stroke-width="0.4"/><rect x="397.4" y="382.6" width="1.4" height="2" fill="#e8e060"/><path d="M403,381.5 h5.2 v3 q-2.6,2.4 -5.2,0 z" fill="#8c8a28" stroke="#5c5a10" stroke-width="0.4"/><rect x="404.9" y="382.6" width="1.4" height="2" fill="#e8e060"/><rect x="410.6" y="382" width="5" height="5.5" rx="0.6" fill="#6a94e0" stroke="#3458a8" stroke-width="0.5"/><rect x="412.0" y="383.2" width="2.2" height="2.4" fill="#c8dcff"/><rect x="416.6" y="382" width="5" height="5.5" rx="0.6" fill="#6a94e0" stroke="#3458a8" stroke-width="0.5"/><rect x="418.0" y="383.2" width="2.2" height="2.4" fill="#c8dcff"/><rect x="384.2" y="356" width="0.8" height="0.8" fill="#777"/><rect x="384.2" y="358.5" width="0.8" height="0.8" fill="#777"/></svg>
<div class="a" style="left:427.5px;top:355px;width:169px;height:29px;background:#c6c4be"></div>
<div class="a" style="left:427.7px;top:355.2px;width:165.6px;height:3.3px;background:#f4f3ef"></div>
<div class="t" style="left:469.5px;top:355.6px;font-size:2.4px;color:#555;">Unit</div>
<div class="t" style="left:496px;top:355.6px;font-size:2.4px;color:#555;">A</div>
<div class="t" style="left:515px;top:355.6px;font-size:2.4px;color:#555;">B</div>
<div class="t" style="left:532.2px;top:355.6px;font-size:2.4px;color:#555;">B-A</div>
<div class="t" style="left:552.7px;top:355.6px;font-size:2.4px;color:#555;">C</div>
<div class="t" style="left:571.2px;top:355.6px;font-size:2.4px;color:#555;">D</div>
<div class="t" style="left:588.2px;top:355.6px;font-size:2.4px;color:#555;">D-C</div>
<div class="a" style="left:427.7px;top:358.5px;width:165.6px;height:18.1px;background:#fff"></div>
<div class="a" style="left:428.4px;top:359.2px;width:3px;height:3px;background:#d8d8d8;border:0.5px solid #505050"></div>
<div class="a" style="left:432.2px;top:359.0px;width:3.6px;height:3.4px;background:#e8f020;border-radius:50%"></div>
<div class="t" style="left:437px;top:360.3px;font-size:2.6px;color:#222;transform-origin:0 0;transform:scaleX(0.819);font-weight:bold">Ax1 Cmd Speed</div>
<div class="a" style="left:428.4px;top:362.6px;width:3px;height:3px;background:#d8d8d8;border:0.5px solid #505050"></div>
<div class="a" style="left:432.2px;top:362.40000000000003px;width:3.6px;height:3.4px;background:#f8c0c8;border-radius:50%"></div>
<div class="t" style="left:437px;top:363.70000000000005px;font-size:2.6px;color:#222;transform-origin:0 0;transform:scaleX(0.819);font-weight:bold">Ax1 Cmd Speed</div>
<div class="a" style="left:428.4px;top:366.3px;width:3px;height:3px;background:#d8d8d8;border:0.5px solid #505050"></div>
<div class="a" style="left:432.2px;top:366.1px;width:3.6px;height:3.4px;background:#1010e8;border-radius:50%"></div>
<div class="t" style="left:437px;top:367.40000000000003px;font-size:2.6px;color:#222;transform-origin:0 0;transform:scaleX(0.819);font-weight:bold">Ax1 Cmd Speed</div>
<div class="a" style="left:428.4px;top:369.9px;width:3px;height:3px;background:#d8d8d8;border:0.5px solid #505050"></div>
<div class="a" style="left:432.2px;top:369.7px;width:3.6px;height:3.4px;background:#60e060;border-radius:50%"></div>
<div class="t" style="left:437px;top:371.0px;font-size:2.6px;color:#222;transform-origin:0 0;transform:scaleX(0.819);font-weight:bold">Ax1 Cmd Speed</div>
<div class="a" style="left:428.4px;top:373.5px;width:3px;height:3px;background:#d8d8d8;border:0.5px solid #505050"></div>
<div class="a" style="left:432.2px;top:373.3px;width:3.6px;height:3.4px;background:#3a3ae0;border-radius:50%"></div>
<div class="t" style="left:437px;top:374.6px;font-size:2.6px;color:#222;transform-origin:0 0;transform:scaleX(0.819);font-weight:bold">Ax1 Cmd Speed</div>
<div class="t" style="left:467.89px;top:360.09999999999997px;font-size:2.5px;color:#333;">20ms</div>
<div class="t" style="left:490.46px;top:360.09999999999997px;font-size:2.5px;color:#333;">150000</div>
<div class="t" style="left:509.85px;top:360.09999999999997px;font-size:2.5px;color:#333;">20000</div>
<div class="t" style="left:529.05px;top:360.09999999999997px;font-size:2.5px;color:#333;">35000</div>
<div class="t" style="left:546.06px;top:360.09999999999997px;font-size:2.5px;color:#333;">271000</div>
<div class="t" style="left:564.46px;top:360.09999999999997px;font-size:2.5px;color:#333;">271000</div>
<div class="t" style="left:590.61px;top:360.09999999999997px;font-size:2.5px;color:#333;">0</div>
<div class="t" style="left:467.89px;top:363.5px;font-size:2.5px;color:#333;">20ms</div>
<div class="t" style="left:490.46px;top:363.5px;font-size:2.5px;color:#333;">200000</div>
<div class="t" style="left:508.46px;top:363.5px;font-size:2.5px;color:#333;">100000</div>
<div class="t" style="left:527.66px;top:363.5px;font-size:2.5px;color:#333;">600000</div>
<div class="t" style="left:546.06px;top:363.5px;font-size:2.5px;color:#333;">477060</div>
<div class="t" style="left:564.46px;top:363.5px;font-size:2.5px;color:#333;">474790</div>
<div class="t" style="left:584.35px;top:363.5px;font-size:2.5px;color:#333;">89,760</div>
<div class="t" style="left:466.91px;top:367.2px;font-size:2.5px;color:#333;">10rpm</div>
<div class="t" style="left:490.46px;top:367.2px;font-size:2.5px;color:#333;">500000</div>
<div class="t" style="left:508.46px;top:367.2px;font-size:2.5px;color:#333;">100000</div>
<div class="t" style="left:527.66px;top:367.2px;font-size:2.5px;color:#333;">321000</div>
<div class="t" style="left:546.06px;top:367.2px;font-size:2.5px;color:#333;">560377</div>
<div class="t" style="left:564.46px;top:367.2px;font-size:2.5px;color:#333;">527575</div>
<div class="t" style="left:583.66px;top:367.2px;font-size:2.5px;color:#333;">342000</div>
<div class="t" style="left:553.01px;top:370.79999999999995px;font-size:2.5px;color:#333;">0</div>
<div class="t" style="left:571.41px;top:370.79999999999995px;font-size:2.5px;color:#333;">0</div>
<div class="t" style="left:590.61px;top:370.79999999999995px;font-size:2.5px;color:#333;">0</div>
<div class="t" style="left:553.01px;top:374.4px;font-size:2.5px;color:#333;">0</div>
<div class="t" style="left:571.41px;top:374.4px;font-size:2.5px;color:#333;">0</div>
<div class="t" style="left:590.61px;top:374.4px;font-size:2.5px;color:#333;">0</div>
<div class="a" style="left:427.7px;top:383.6px;width:104.8px;height:4.4px;background:#ece9d8;border:0.5px solid #b8b4a0;border-radius:1px"></div>
<div class="a" style="left:532.5px;top:383.6px;width:60.8px;height:4.4px;background:#f6f5ee;border:0.5px solid #c8c4b0;border-radius:1px"></div>
<div class="t" style="left:476px;top:384.6px;font-size:2.2px;color:#555;">&#x25C4;</div>
<div class="t" style="left:560px;top:384.6px;font-size:2.2px;color:#555;">&#x25BA;</div>
<div class="a" style="left:383.2px;top:388.6px;width:267.40000000000003px;height:5px;background:#ece9d8;border-top:0.5px solid #d0ccbc"></div>
<div class="t" style="left:386px;top:389.8px;font-size:2.6px;color:#666;">Connect Stat: No.2</div>
<div class="t" style="left:421px;top:389.8px;font-size:2.6px;color:#666;">MODE&nbsp;&nbsp;&nbsp;&nbsp; Digital Oscl</div>
<div class="t" style="left:510px;top:389.6px;font-size:2.8px;color:#444;transform-origin:0 0;transform:scaleX(1.174);">U0: 327600</div>
<div class="t" style="left:536px;top:389.6px;font-size:2.8px;color:#444;transform-origin:0 0;transform:scaleX(1.121);">U0: 311000</div>
<div class="t" style="left:556px;top:389.6px;font-size:2.8px;color:#444;transform-origin:0 0;transform:scaleX(1.236);">Pal</div>
<div class="a" style="left:382px;top:190.5px;width:1.4px;height:203px;background:#a29e98"></div>
<div class="a" style="left:382px;top:393.7px;width:22px;height:1.6px;background:#52c05a"></div>
<div class="a" style="left:404px;top:393.7px;width:246.5px;height:1.6px;background:#2a78e0"></div>
</div>
</body></html>
